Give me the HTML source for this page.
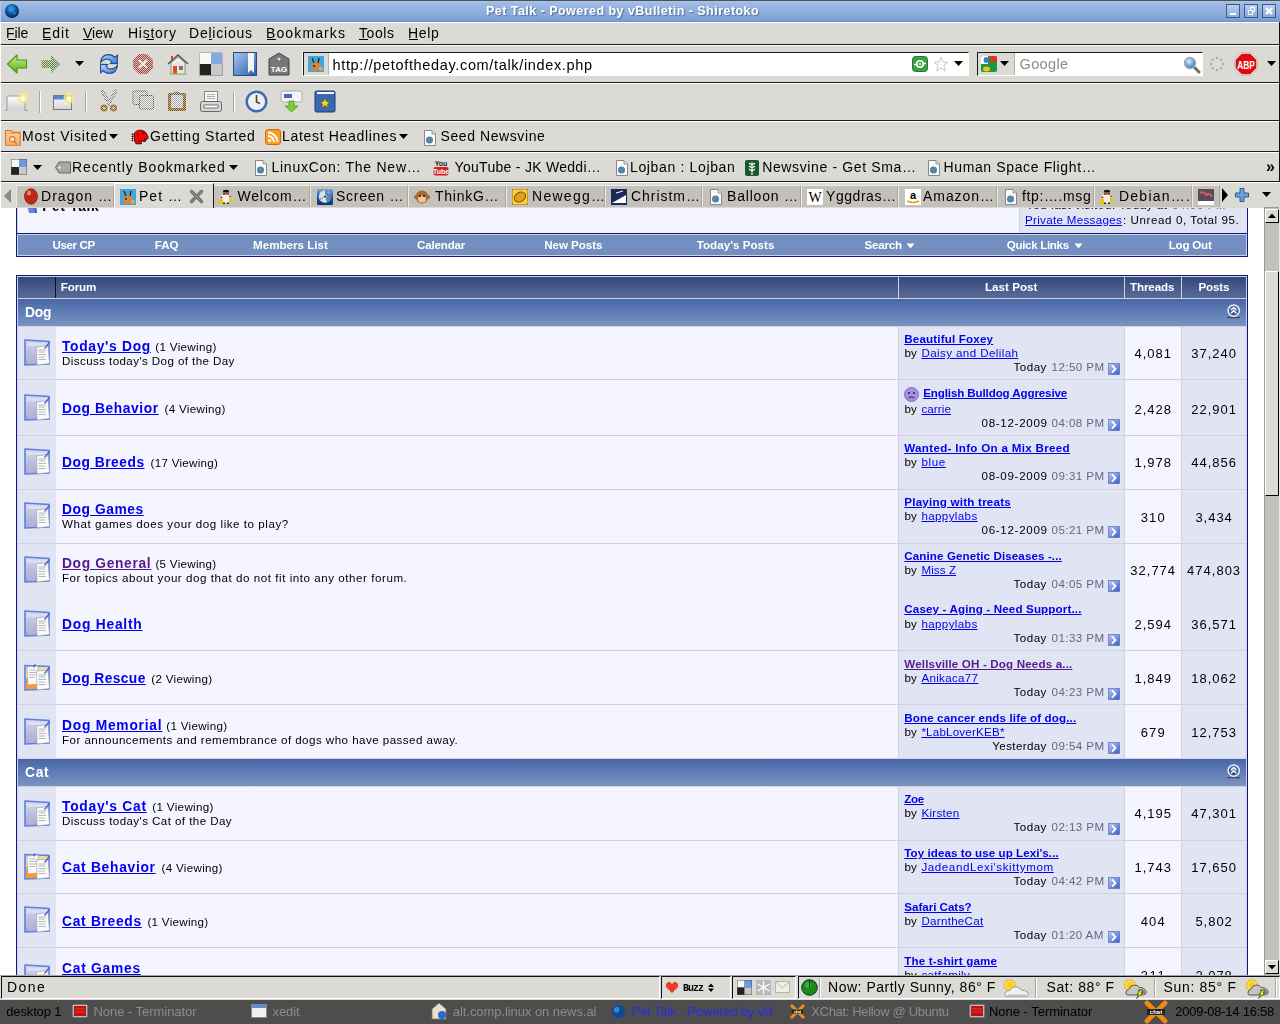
<!DOCTYPE html>
<html><head><meta charset="utf-8"><title>Pet Talk</title>
<style>*{margin:0;padding:0;box-sizing:border-box}
html,body{width:1280px;height:1024px;overflow:hidden;background:#dcdad5;font-family:"Liberation Sans",sans-serif;font-size:13px;color:#000}
.a{position:absolute}
.t{position:absolute;white-space:nowrap;line-height:1}
.u{text-decoration:underline}
</style></head><body>
<div class="a" style="left:0;top:22px;width:1280px;height:954px;background:#dcdad5"></div><div class="a" style="left:0;top:22px;width:1280px;height:1px;background:#fff"></div><div class="a" style="left:0;top:44px;width:1280px;height:1px;background:#1e1e1e"></div><div class="a" style="left:0;top:45px;width:1280px;height:1px;background:#fff"></div><div class="a" style="left:0;top:82px;width:1280px;height:1px;background:#1e1e1e"></div><div class="a" style="left:0;top:83px;width:1280px;height:1px;background:#fff"></div><div class="a" style="left:0;top:120px;width:1280px;height:1px;background:#1e1e1e"></div><div class="a" style="left:0;top:121px;width:1280px;height:1px;background:#fff"></div><div class="a" style="left:0;top:151px;width:1280px;height:1px;background:#1e1e1e"></div><div class="a" style="left:0;top:152px;width:1280px;height:1px;background:#fff"></div><div class="a" style="left:0;top:181px;width:1280px;height:1px;background:#1e1e1e"></div><div class="a" style="left:0;top:182px;width:1280px;height:1px;background:#fff"></div><div class="a" style="left:1279px;top:22px;width:1px;height:160px;background:#111"></div><div class="a" style="left:0;top:0;width:1280px;height:1px;background:#505050"></div>
<div class="a" style="left:0;top:1px;width:1280px;height:21px;background:linear-gradient(#b3cdf2 0,#a0bde7 1px,#93b2e0 8px,#84a6d8 16px,#7a9ed3 20px,#5f86c2 21px)"></div>
<svg class="a" style="left:4px;top:3px" width="16" height="16" viewBox="0 0 16 16"><defs><radialGradient id="gl" cx="0.45" cy="0.35" r="0.75"><stop offset="0" stop-color="#54b4ec"/><stop offset="0.45" stop-color="#0e56aa"/><stop offset="1" stop-color="#03132e"/></radialGradient></defs><circle cx="8" cy="8" r="7" fill="url(#gl)"/><path d="M4 5 Q7 3 9 5 Q8 8 5 8Z M9 9 Q12 8 12 11 Q10 13 9 11Z" fill="#2a90d8" opacity=".6"/></svg>
<div class="a" style="left:1226px;top:4px;width:14px;height:14px;border:1px solid #3f5a80;background:linear-gradient(#b8d0f2,#8aaad9)"></div>
<div class="a" style="left:1244px;top:4px;width:14px;height:14px;border:1px solid #3f5a80;background:linear-gradient(#b8d0f2,#8aaad9)"></div>
<div class="a" style="left:1262px;top:4px;width:14px;height:14px;border:1px solid #3f5a80;background:linear-gradient(#b8d0f2,#8aaad9)"></div>
<div class="a" style="left:1230px;top:13px;width:6px;height:2px;background:#fff"></div>
<div class="a" style="left:1250px;top:7px;width:5px;height:5px;border:1px solid #fff"></div><div class="a" style="left:1248px;top:10px;width:5px;height:5px;border:1px solid #fff;background:#8fb0de"></div>
<svg class="a" style="left:1265px;top:7px" width="8" height="8" viewBox="0 0 8 8"><path d="M1 1L7 7M7 1L1 7" stroke="#fff" stroke-width="2.2"/></svg>
<div class="a" style="left:8px;top:39px;width:8px;height:1px;background:#000"></div>
<div class="a" style="left:43px;top:39px;width:8px;height:1px;background:#000"></div>
<div class="a" style="left:83px;top:39px;width:9px;height:1px;background:#000"></div>
<div class="a" style="left:146px;top:39px;width:8px;height:1px;background:#000"></div>
<div class="a" style="left:209px;top:39px;width:3px;height:1px;background:#000"></div>
<div class="a" style="left:267px;top:39px;width:9px;height:1px;background:#000"></div>
<div class="a" style="left:359px;top:39px;width:9px;height:1px;background:#000"></div>
<div class="a" style="left:409px;top:39px;width:9px;height:1px;background:#000"></div>
<svg class="a" style="left:6px;top:53px" width="22" height="22" viewBox="0 0 22 22"><defs><linearGradient id="gb" x1="0" y1="0" x2="0" y2="1"><stop offset="0" stop-color="#c6f08a"/><stop offset="1" stop-color="#58b01e"/></linearGradient></defs><path d="M1.5 11 L11 2 V7 H20.5 V15 H11 V20 Z" fill="url(#gb)" stroke="#4a9a10" stroke-width="1.2" stroke-linejoin="round"/></svg>
<svg class="a" style="left:40px;top:53px" width="22" height="22" viewBox="0 0 22 22"><defs><pattern id="dot" width="2" height="2" patternUnits="userSpaceOnUse"><rect width="1" height="1" fill="#3f7a22"/><rect x="1" y="1" width="1" height="1" fill="#3f7a22"/></pattern></defs><path d="M20.5 11 L11 2 V7 H1.5 V15 H11 V20 Z" fill="url(#dot)" opacity=".9"/></svg>
<svg class="a" style="left:75px;top:61px" width="10" height="6"><path d="M0 0H9L4.5 5Z" fill="#000"/></svg>
<svg class="a" style="left:100px;top:54px" width="18" height="20" viewBox="0 0 18 20"><defs><linearGradient id="grl" x1="0" y1="0" x2="1" y2="1"><stop offset="0" stop-color="#c0dcf8"/><stop offset="1" stop-color="#3e74c4"/></linearGradient></defs><path d="M0.5 8.6 Q1.5 0.6 8.5 0.6 Q12.5 0.6 14.8 3.4 L17.4 1.2 L17.4 9.6 L10.4 9.5 L11.9 7.8 Q10 5 7.5 5 Q3 5.2 0.5 8.6Z" fill="url(#grl)" stroke="#1c4c9c" stroke-width="1.1" stroke-linejoin="miter"/><path d="M17.5 11.4 Q16.5 19.4 9.5 19.4 Q5.5 19.4 3.2 16.6 L0.6 18.8 L0.6 10.4 L7.6 10.5 L6.1 12.2 Q8 15 10.5 15 Q15 14.8 17.5 11.4Z" fill="url(#grl)" stroke="#1c4c9c" stroke-width="1.1" stroke-linejoin="miter"/></svg>
<svg class="a" style="left:132px;top:53px" width="22" height="22" viewBox="0 0 22 22"><defs><pattern id="dotr" width="2" height="2" patternUnits="userSpaceOnUse"><rect width="2" height="2" fill="#d8c8c0"/><rect width="1" height="1" fill="#a04040"/><rect x="1" y="1" width="1" height="1" fill="#a04040"/></pattern></defs><path d="M7 1H15L21 7V15L15 21H7L1 15V7Z" fill="url(#dotr)"/><path d="M7 7L15 15M15 7L7 15" stroke="#eee" stroke-width="2"/></svg>
<svg class="a" style="left:166px;top:52px" width="24" height="24" viewBox="0 0 24 24"><path d="M2 12 L12 3 L22 12" fill="none" stroke="#555" stroke-width="1.6"/><path d="M5 11 L12 5 L19 11 V22 H5Z" fill="#f2f0ea" stroke="#777" stroke-width=".8"/><path d="M7 12V21M9 11V21M11 10V21M13 10V21M15 11V21M17 12V21" stroke="#ccc" stroke-width=".6"/><rect x="7" y="14" width="4" height="8" fill="#e0501a"/><rect x="13" y="14" width="4" height="4" fill="#777"/><rect x="3" y="21.5" width="18" height="1.2" fill="#9acd5a"/><rect x="5" y="4" width="2" height="4" fill="#d84a1a"/></svg>
<svg class="a" style="left:199px;top:52px" width="24" height="24" viewBox="0 0 24 24"><rect x="0.5" y="0.5" width="23" height="23" fill="#666" /><rect x="1" y="1" width="11" height="11" fill="#f4f4f4"/><rect x="12" y="1" width="11" height="11" fill="#5a8fd8"/><rect x="1" y="12" width="11" height="11" fill="#222"/><rect x="12" y="12" width="11" height="11" fill="#c8c8c8"/><rect x="0" y="0" width="24" height="12" fill="#fff" opacity=".25"/></svg>
<svg class="a" style="left:233px;top:52px" width="24" height="24" viewBox="0 0 24 24"><defs><linearGradient id="gbm" x1="0" y1="0" x2="1" y2="1"><stop offset="0" stop-color="#a8c8f0"/><stop offset="1" stop-color="#2a5ca8"/></linearGradient></defs><rect x="0.5" y="0.5" width="23" height="23" fill="url(#gbm)" stroke="#2a4a80"/><path d="M15 1 V21 L18 18 L21 21 V1Z" fill="#f4f4f4"/></svg>
<svg class="a" style="left:268px;top:52px" width="22" height="24" viewBox="0 0 22 24"><path d="M1 7 L11 1 L21 7 V23 H1Z" fill="#777" stroke="#444"/><circle cx="11" cy="7" r="1.5" fill="#ddd"/><text x="11" y="20" font-family="Liberation Sans" font-weight="bold" font-size="8" fill="#fff" text-anchor="middle">TAG</text></svg>
<div class="a" style="left:303px;top:52px;width:666px;height:24px;background:#fff;border:1px solid #fff;border-top-color:#1a1a1a;border-left-color:#1a1a1a"></div>
<div class="a" style="left:302px;top:52px;width:1px;height:24px;background:#fff"></div>
<div class="a" style="left:304px;top:53px;width:25px;height:22px;background:#dcdad5;border-right:1px solid #b5b3ae"></div>
<svg class="a" style="left:308px;top:56px" width="16" height="16" viewBox="0 0 16 16"><rect width="16" height="16" fill="#38a8e8"/><path d="M3 1 L6 7 L9 6 L11 1 L12 8 Q14 12 10 15 H3 Q1 12 4 9Z" fill="#c88a4a"/><path d="M4 2 L6 7 M11 2 L10 7" stroke="#222" stroke-width="1.3"/><circle cx="6" cy="10" r="1" fill="#222"/><path d="M11 11 Q15 10 15 14 Q13 16 11 14Z" fill="#f0a040"/></svg>
<svg class="a" style="left:912px;top:56px" width="16" height="16" viewBox="0 0 16 16"><rect x="0.5" y="0.5" width="15" height="15" rx="3" fill="#3aa04a" stroke="#2a7a36"/><circle cx="8" cy="8" r="3.2" fill="none" stroke="#fff" stroke-width="1.6"/><path d="M2 8.5 H5 M11 7.5 H14" stroke="#fff" stroke-width="1.6"/><circle cx="8" cy="8" r="1" fill="#fff"/></svg>
<svg class="a" style="left:933px;top:56px" width="16" height="16" viewBox="0 0 16 16"><path d="M8 1 L10 6 L15 6.2 L11 9.5 L12.5 15 L8 12 L3.5 15 L5 9.5 L1 6.2 L6 6Z" fill="#fafafa" stroke="#bbb" stroke-width=".8"/></svg>
<svg class="a" style="left:954px;top:61px" width="10" height="6"><path d="M0 0H9L4.5 5Z" fill="#000"/></svg>
<div class="a" style="left:977px;top:52px;width:226px;height:24px;background:#fff;border:1px solid #fff;border-top-color:#1a1a1a;border-left-color:#1a1a1a"></div>
<div class="a" style="left:978px;top:53px;width:37px;height:22px;background:#dcdad5;border-right:1px solid #b5b3ae"></div>
<svg class="a" style="left:981px;top:56px" width="16" height="16" viewBox="0 0 16 16"><rect x="0" y="0" width="16" height="16" rx="2" fill="#1a9a3a"/><path d="M9 0 H14 Q16 0 16 2 V6 H9Z" fill="#e83020"/><path d="M0 2 Q0 0 2 0 H7 V8 H0Z" fill="#fff"/><ellipse cx="5" cy="4" rx="2.4" ry="3" fill="#3a7ae0"/><ellipse cx="5.5" cy="13" rx="3.5" ry="2.5" fill="#f8c020"/></svg>
<svg class="a" style="left:1000px;top:61px" width="10" height="6"><path d="M0 0H9L4.5 5Z" fill="#000"/></svg>
<svg class="a" style="left:1183px;top:56px" width="18" height="18" viewBox="0 0 18 18"><defs><radialGradient id="mg" cx="0.4" cy="0.35" r="0.7"><stop offset="0" stop-color="#e0f0ff"/><stop offset="0.6" stop-color="#6a9ee0"/><stop offset="1" stop-color="#3a6ab0"/></radialGradient></defs><path d="M11 11 L16 16" stroke="#6a6e6a" stroke-width="3" stroke-linecap="round"/><circle cx="7" cy="7" r="5.5" fill="url(#mg)" stroke="#a8aaa8" stroke-width="1.4"/></svg>
<svg class="a" style="left:1209px;top:56px" width="16" height="16" viewBox="0 0 16 16"><g fill="#aaa"><circle cx="8" cy="2" r="1.2"/><circle cx="12.2" cy="3.8" r="1.2"/><circle cx="14" cy="8" r="1.2"/><circle cx="12.2" cy="12.2" r="1.2"/><circle cx="8" cy="14" r="1.2"/><circle cx="3.8" cy="12.2" r="1.2"/><circle cx="2" cy="8" r="1.2"/><circle cx="3.8" cy="3.8" r="1.2"/></g></svg>
<svg class="a" style="left:1234px;top:52px" width="24" height="24" viewBox="0 0 24 24"><path d="M7.5 1 H16.5 L23 7.5 V16.5 L16.5 23 H7.5 L1 16.5 V7.5Z" fill="#e00c0c" stroke="#f4f4f4" stroke-width="1.3"/><path d="M7.3 0.4 H16.7 L23.6 7.3 V16.7 L16.7 23.6 H7.3 L0.4 16.7 V7.3Z" fill="none" stroke="#8a8a8a" stroke-width=".5"/><text x="3.2" y="16.5" font-family="Liberation Sans" font-weight="bold" font-size="10.5" fill="#fff" textLength="17.6" lengthAdjust="spacingAndGlyphs">ABP</text></svg>
<svg class="a" style="left:1267px;top:61px" width="10" height="6"><path d="M0 0H9L4.5 5Z" fill="#000"/></svg><svg class="a" style="left:4px;top:92px" width="26" height="20" viewBox="0 0 26 20"><defs><linearGradient id="gnt" x1="0" y1="0" x2="0" y2="1"><stop offset="0" stop-color="#fff"/><stop offset="1" stop-color="#d0d0d0"/></linearGradient></defs><path d="M1 18.5 H3 V6 Q3 4 5 4 H19 Q21 4 21 6 V18.5 H24" fill="url(#gnt)" stroke="#999" stroke-width="1"/><circle cx="19" cy="6" r="5.5" fill="#f8ec70" opacity=".8"/><path d="M19 2.5 L20 5 L22.5 5.2 L20.6 6.8 L21.2 9.3 L19 8 L16.8 9.3 L17.4 6.8 L15.5 5.2 L18 5Z" fill="#fff"/></svg>
<div class="a" style="left:39px;top:91px;width:1px;height:22px;background:#a8a6a0"></div><div class="a" style="left:40px;top:91px;width:1px;height:22px;background:#fff"></div>
<svg class="a" style="left:52px;top:92px" width="24" height="20" viewBox="0 0 24 20"><defs><linearGradient id="gnw" x1="0" y1="0" x2="0" y2="1"><stop offset="0" stop-color="#fff"/><stop offset="1" stop-color="#d4d4d4"/></linearGradient></defs><rect x="1.5" y="3.5" width="18" height="14" fill="url(#gnw)" stroke="#777"/><rect x="2" y="4" width="17" height="3.5" fill="#5a8ad0"/><circle cx="17" cy="6" r="5.5" fill="#f8ec70" opacity=".8"/><path d="M17 2.5 L18 5 L20.5 5.2 L18.6 6.8 L19.2 9.3 L17 8 L14.8 9.3 L15.4 6.8 L13.5 5.2 L16 5Z" fill="#fff"/></svg>
<div class="a" style="left:85px;top:91px;width:1px;height:22px;background:#a8a6a0"></div><div class="a" style="left:86px;top:91px;width:1px;height:22px;background:#fff"></div>
<svg class="a" style="left:96px;top:86px" width="96" height="30" viewBox="0 0 96 30"><defs>
<pattern id="pl" width="2" height="2" patternUnits="userSpaceOnUse"><rect width="2" height="2" fill="#f4f4f4"/><rect width="1" height="1" fill="#a8a8a8"/><rect x="1" y="1" width="1" height="1" fill="#a8a8a8"/></pattern>
<pattern id="pd" width="2" height="2" patternUnits="userSpaceOnUse"><rect width="2" height="2" fill="#dcdad5"/><rect width="1" height="1" fill="#4a4a4a"/><rect x="1" y="1" width="1" height="1" fill="#4a4a4a"/></pattern>
<pattern id="pb" width="2" height="2" patternUnits="userSpaceOnUse"><rect width="2" height="2" fill="#c8b088"/><rect width="1" height="1" fill="#7a5418"/><rect x="1" y="1" width="1" height="1" fill="#7a5418"/></pattern></defs>
<path d="M6.5 5.5 L13 17 L19.5 5.5" fill="none" stroke="url(#pd)" stroke-width="3.2" stroke-linecap="round"/><path d="M6.5 5.5 L13 17 L19.5 5.5" fill="none" stroke="url(#pl)" stroke-width="1.6" stroke-linecap="round"/>
<circle cx="8" cy="22" r="3.6" fill="url(#pb)"/><circle cx="17.5" cy="22" r="3.6" fill="url(#pb)"/><circle cx="8" cy="22" r="1" fill="#f0f0f0"/><circle cx="17.5" cy="22" r="1" fill="#f0f0f0"/>
<rect x="37" y="5" width="14" height="13.5" rx="1" fill="url(#pl)" stroke="url(#pd)" stroke-width="1"/><rect x="43.5" y="9.5" width="14" height="13.5" rx="1" fill="url(#pl)" stroke="url(#pd)" stroke-width="1"/>
<rect x="72" y="7" width="18" height="18" rx="1" fill="url(#pb)"/><rect x="75" y="9" width="12" height="13" rx="1" fill="url(#pl)"/><path d="M77 9 Q77 5.5 81 5.5 Q85 5.5 85 9Z" fill="url(#pd)"/>
</svg>
<svg class="a" style="left:199px;top:90px" width="24" height="23" viewBox="0 0 24 23"><rect x="5.5" y="1.5" width="13" height="10" fill="#f8f8f8" stroke="#888"/><path d="M8 4.5H16M8 6.5H16M8 8.5H16" stroke="#999" stroke-width=".8"/><rect x="1.5" y="11.5" width="21" height="10" rx="2" fill="#d8d8d8" stroke="#666"/><rect x="5" y="15" width="14" height="3" fill="#fff" stroke="#555" stroke-width=".8"/></svg>
<div class="a" style="left:233px;top:91px;width:1px;height:22px;background:#a8a6a0"></div><div class="a" style="left:234px;top:91px;width:1px;height:22px;background:#fff"></div>
<svg class="a" style="left:245px;top:90px" width="23" height="23" viewBox="0 0 23 23"><circle cx="11.5" cy="11.5" r="9.8" fill="#f0f0f0" stroke="#3a6ab8" stroke-width="2.4"/><path d="M11.5 5 V12 L15 13.5" stroke="#444" stroke-width="1.6" fill="none"/></svg>
<svg class="a" style="left:280px;top:90px" width="23" height="23" viewBox="0 0 23 23"><rect x="1" y="1" width="21" height="11" rx="2" fill="#f4f4f4" stroke="#aaa"/><rect x="4" y="4" width="8" height="4" fill="#3a6ab8"/><path d="M9 11 H14 V16 H18 L11.5 22 L5 16 H9Z" fill="#7ad03a" stroke="#4a9a1a" stroke-width=".8"/></svg>
<svg class="a" style="left:314px;top:90px" width="22" height="23" viewBox="0 0 22 23"><rect x="1" y="1" width="20" height="21" rx="1.5" fill="#3a68b0" stroke="#1a3a78"/><rect x="3" y="2" width="17" height="2" fill="#fff"/><path d="M11 8 L12.5 11.5 L16 11.7 L13.3 14 L14.2 17.5 L11 15.5 L7.8 17.5 L8.7 14 L6 11.7 L9.5 11.5Z" fill="#f8d820" stroke="#6a5a10" stroke-width=".6"/></svg>
<svg class="a" style="left:5px;top:130px" width="16" height="16" viewBox="0 0 16 16"><defs><linearGradient id="fo" x1="0" y1="0" x2="0" y2="1"><stop offset="0" stop-color="#fbd8a8"/><stop offset="1" stop-color="#f0b070"/></linearGradient></defs><path d="M0.6 0.6 H6 L7.2 2.4 H15.2 V15.2 H0.6Z" fill="url(#fo)" stroke="#e07818" stroke-width="1.1"/><path d="M1 3.4 H15" stroke="#e8a060" stroke-width=".8"/><circle cx="7.2" cy="9.2" r="2.6" fill="#fce8d0" stroke="#e07818" stroke-width="1.2"/><path d="M9 11 L11.5 13.5" stroke="#e07818" stroke-width="1.5"/></svg>
<svg class="a" style="left:109px;top:134px" width="10" height="6"><path d="M0 0H9L4.5 5Z" fill="#000"/></svg>
<svg class="a" style="left:131px;top:129px" width="18" height="16" viewBox="0 0 18 16"><path d="M3 5 Q5 1 10 1.2 Q13 1.5 15 4 L17 7.5 Q17.5 9.5 16 10.5 L13 10 L15 12 L13 12.5 Q11 11.5 10 12.5 L10.5 14.8 H5 Q3 12 3.5 10 Q2.5 7 3 5Z" fill="#f00" stroke="#1a0a0a" stroke-width=".9"/><path d="M6 4 Q8 6 7 9 M8 10 Q9 12 8 13" stroke="#6a0000" stroke-width="1" fill="none"/><circle cx="12.5" cy="4.2" r=".9" fill="#222"/><g fill="#000"><circle cx="1.4" cy="5.4" r=".8"/><circle cx="1.4" cy="7.5" r=".8"/><circle cx="1.4" cy="9.5" r=".8"/><circle cx="1.4" cy="11.4" r=".8"/></g></svg>
<svg class="a" style="left:265px;top:129px" width="16" height="16" viewBox="0 0 16 16"><rect x="0.5" y="0.5" width="15" height="15" rx="2.5" fill="#f6a020" stroke="#d06a10"/><circle cx="4.5" cy="11.5" r="1.6" fill="#fff"/><path d="M3 7 A6 6 0 0 1 9 13 M3 3.5 A9.5 9.5 0 0 1 12.5 13" fill="none" stroke="#fff" stroke-width="1.8"/></svg>
<svg class="a" style="left:399px;top:134px" width="10" height="6"><path d="M0 0H9L4.5 5Z" fill="#000"/></svg>
<svg class="a" style="left:422px;top:130px" width="16" height="16" viewBox="0 0 16 16"><path d="M2.5 0.5 H10 L13.5 4 V15.5 H2.5Z" fill="#fafafa" stroke="#888" stroke-width="1"/><path d="M10 0.5 V4 H13.5" fill="#ddd" stroke="#888" stroke-width=".8"/><circle cx="7.5" cy="10" r="3.5" fill="#4a80c0"/><path d="M5.5 9 Q7 7.5 8.5 9 Q8 11 6 11.5Z M8.5 11 Q10 10 10.5 11.5" fill="#6aa040"/></svg>
<svg class="a" style="left:11px;top:159px" width="16" height="16" viewBox="0 0 16 16"><rect x="0" y="0" width="16" height="16" fill="#555"/><rect x="0.5" y="0.5" width="7.5" height="7.5" fill="#f8f8f8"/><rect x="8" y="0.5" width="7.5" height="7.5" fill="#6a9ae0"/><rect x="0.5" y="8" width="7.5" height="7.5" fill="#222"/><rect x="8" y="8" width="7.5" height="7.5" fill="#c8c8c8"/></svg>
<svg class="a" style="left:33px;top:165px" width="10" height="6"><path d="M0 0H9L4.5 5Z" fill="#000"/></svg>
<svg class="a" style="left:55px;top:161px" width="16" height="13" viewBox="0 0 16 13"><path d="M0.5 6.5 L4 1 H15.5 V12 H4Z" fill="#a8a8a8" stroke="#666"/><circle cx="4.5" cy="6.5" r="1.2" fill="#eee"/></svg>
<svg class="a" style="left:229px;top:165px" width="10" height="6"><path d="M0 0H9L4.5 5Z" fill="#000"/></svg>
<svg class="a" style="left:253px;top:160px" width="16" height="16" viewBox="0 0 16 16"><path d="M2.5 0.5 H10 L13.5 4 V15.5 H2.5Z" fill="#fafafa" stroke="#888" stroke-width="1"/><path d="M10 0.5 V4 H13.5" fill="#ddd" stroke="#888" stroke-width=".8"/><circle cx="7.5" cy="10" r="3.5" fill="#4a80c0"/><path d="M5.5 9 Q7 7.5 8.5 9 Q8 11 6 11.5Z M8.5 11 Q10 10 10.5 11.5" fill="#6aa040"/></svg>
<svg class="a" style="left:433px;top:159px" width="16" height="17" viewBox="0 0 16 17"><text x="8" y="7" font-family="Liberation Sans" font-weight="bold" font-size="7" fill="#222" text-anchor="middle">You</text><rect x="0.5" y="8" width="15" height="8.5" rx="2" fill="#d02020"/><text x="8" y="15" font-family="Liberation Sans" font-weight="bold" font-size="7" fill="#fff" text-anchor="middle">Tube</text></svg>
<svg class="a" style="left:614px;top:160px" width="16" height="16" viewBox="0 0 16 16"><path d="M2.5 0.5 H10 L13.5 4 V15.5 H2.5Z" fill="#fafafa" stroke="#888" stroke-width="1"/><path d="M10 0.5 V4 H13.5" fill="#ddd" stroke="#888" stroke-width=".8"/><circle cx="7.5" cy="10" r="3.5" fill="#4a80c0"/><path d="M5.5 9 Q7 7.5 8.5 9 Q8 11 6 11.5Z M8.5 11 Q10 10 10.5 11.5" fill="#6aa040"/></svg>
<svg class="a" style="left:745px;top:160px" width="14" height="16" viewBox="0 0 14 16"><rect x="0" y="0" width="14" height="16" rx="2" fill="#1a5a2a"/><path d="M7 2 V15 M7 5 L4 3 M7 5 L10 3 M7 8 L4 6 M7 8 L10 6 M7 11 L4 9 M7 11 L10 9" stroke="#fff" stroke-width="1.1" fill="none"/></svg>
<svg class="a" style="left:926px;top:160px" width="16" height="16" viewBox="0 0 16 16"><path d="M2.5 0.5 H10 L13.5 4 V15.5 H2.5Z" fill="#fafafa" stroke="#888" stroke-width="1"/><path d="M10 0.5 V4 H13.5" fill="#ddd" stroke="#888" stroke-width=".8"/><circle cx="7.5" cy="10" r="3.5" fill="#4a80c0"/><path d="M5.5 9 Q7 7.5 8.5 9 Q8 11 6 11.5Z M8.5 11 Q10 10 10.5 11.5" fill="#6aa040"/></svg>
<div class="a" style="left:0;top:183px;width:1280px;height:24px;background:#dcdad5"></div>
<svg class="a" style="left:3px;top:188px" width="9" height="16"><path d="M8 1 V15 L1 8Z" fill="#8a8a8a"/></svg>
<div class="a" style="left:16px;top:185px;width:98px;height:22px;background:#c4c1ba;border-top:1px solid #ecebe8;border-left:1px solid #ecebe8;border-right:1px solid #a8a6a0"></div>
<div class="a" style="left:213px;top:185px;width:97px;height:22px;background:#c4c1ba;border-top:1px solid #ecebe8;border-left:1px solid #ecebe8;border-right:1px solid #a8a6a0"></div>
<div class="a" style="left:310px;top:185px;width:98px;height:22px;background:#c4c1ba;border-top:1px solid #ecebe8;border-left:1px solid #ecebe8;border-right:1px solid #a8a6a0"></div>
<div class="a" style="left:408px;top:185px;width:98px;height:22px;background:#c4c1ba;border-top:1px solid #ecebe8;border-left:1px solid #ecebe8;border-right:1px solid #a8a6a0"></div>
<div class="a" style="left:506px;top:185px;width:99px;height:22px;background:#c4c1ba;border-top:1px solid #ecebe8;border-left:1px solid #ecebe8;border-right:1px solid #a8a6a0"></div>
<div class="a" style="left:605px;top:185px;width:97px;height:22px;background:#c4c1ba;border-top:1px solid #ecebe8;border-left:1px solid #ecebe8;border-right:1px solid #a8a6a0"></div>
<div class="a" style="left:702px;top:185px;width:99px;height:22px;background:#c4c1ba;border-top:1px solid #ecebe8;border-left:1px solid #ecebe8;border-right:1px solid #a8a6a0"></div>
<div class="a" style="left:801px;top:185px;width:97px;height:22px;background:#c4c1ba;border-top:1px solid #ecebe8;border-left:1px solid #ecebe8;border-right:1px solid #a8a6a0"></div>
<div class="a" style="left:898px;top:185px;width:99px;height:22px;background:#c4c1ba;border-top:1px solid #ecebe8;border-left:1px solid #ecebe8;border-right:1px solid #a8a6a0"></div>
<div class="a" style="left:997px;top:185px;width:97px;height:22px;background:#c4c1ba;border-top:1px solid #ecebe8;border-left:1px solid #ecebe8;border-right:1px solid #a8a6a0"></div>
<div class="a" style="left:1094px;top:185px;width:98px;height:22px;background:#c4c1ba;border-top:1px solid #ecebe8;border-left:1px solid #ecebe8;border-right:1px solid #a8a6a0"></div>
<div class="a" style="left:1192px;top:185px;width:28px;height:22px;background:#c4c1ba;border-top:1px solid #ecebe8;border-left:1px solid #ecebe8;border-right:1px solid #a8a6a0"></div>
<div class="a" style="left:114px;top:183px;width:100px;height:25px;background:#dcdad5;border-left:1px solid #fff;border-top:1px solid #fff;border-right:1px solid #1a1a1a"></div>
<svg class="a" style="left:22.5px;top:188px" width="16" height="17" viewBox="0 0 16 17"><ellipse cx="8" cy="8.5" rx="6.5" ry="7.8" fill="#c0281a" stroke="#601008" stroke-width=".6"/><ellipse cx="6" cy="5" rx="2" ry="2.5" fill="#f08070"/></svg>
<svg class="a" style="left:120px;top:189px" width="16" height="16" viewBox="0 0 16 16"><rect width="16" height="16" fill="#38a8e8"/><path d="M3 1 L6 7 L9 6 L11 1 L12 8 Q14 12 10 15 H3 Q1 12 4 9Z" fill="#c88a4a"/><path d="M4 2 L6 7 M11 2 L10 7" stroke="#222" stroke-width="1.3"/><circle cx="6" cy="10" r="1" fill="#222"/><path d="M11 11 Q15 10 15 14 Q13 16 11 14Z" fill="#f0a040"/></svg>
<svg class="a" style="left:219px;top:189px" width="16" height="16" viewBox="0 0 16 16"><path d="M4 1.5 Q7 0 10 1.5 V3 H4Z" fill="#111"/><rect x="4" y="3" width="6" height="3" fill="#8a5a5a"/><path d="M6 5 H8.5 L7.3 6.5Z" fill="#f0b000"/><rect x="2" y="6" width="9.5" height="6.5" rx="1.5" fill="#f2f2e4"/><circle cx="2.6" cy="8.5" r=".7" fill="#000"/><circle cx="11" cy="7.5" r=".7" fill="#000"/><rect x="0" y="10" width="4" height="5" fill="#f4c000"/><path d="M10 9 H12 V12 H14.5 V13.5 H10Z" fill="#f4c000"/><rect x="4" y="12.5" width="6" height="1.2" fill="#fff"/><rect x="4" y="13.6" width="2" height="1.2" fill="#000"/><rect x="8" y="13.6" width="2" height="1.2" fill="#000"/></svg>
<svg class="a" style="left:316.5px;top:189px" width="16" height="16" viewBox="0 0 16 16"><defs><linearGradient id="gsc" x1="0" y1="0" x2="0" y2="1"><stop offset="0" stop-color="#7aa4dc"/><stop offset=".5" stop-color="#1e5aa8"/><stop offset="1" stop-color="#08306a"/></linearGradient></defs><rect width="16" height="16" rx="1.5" fill="url(#gsc)"/><circle cx="8" cy="7.6" r="6.2" fill="#c8e8f8"/><path d="M8 1.4 A6.2 6.2 0 0 1 14.2 7.6 A6.2 6.2 0 0 1 10 13.5 L8 7.6Z" fill="#3a6aa8" opacity=".8"/><circle cx="8" cy="7.6" r="1.6" fill="#0a2a6a" stroke="#fff" stroke-width=".8"/><circle cx="3.6" cy="9.8" r=".9" fill="#f07010"/><circle cx="5.2" cy="9" r=".7" fill="#f07010"/><path d="M11 2 L11.8 4.5 L10.5 4Z M12.5 10 L11.2 12.5 L12 12Z M3 1.5 L3.8 2.8 L2.8 2.8Z" fill="#f8e040"/></svg>
<svg class="a" style="left:414px;top:189px" width="16" height="16" viewBox="0 0 16 16"><circle cx="8" cy="8" r="6.5" fill="#a86a30"/><circle cx="2" cy="8" r="2" fill="#a86a30"/><circle cx="14" cy="8" r="2" fill="#a86a30"/><ellipse cx="8" cy="10" rx="4" ry="3.5" fill="#f0c890"/><circle cx="6" cy="7" r=".9" fill="#000"/><circle cx="10" cy="7" r=".9" fill="#000"/></svg>
<svg class="a" style="left:512px;top:189px" width="16" height="16" viewBox="0 0 16 16"><rect width="16" height="16" rx="2" fill="#f8d040" stroke="#9a7010"/><ellipse cx="8" cy="8" rx="6" ry="4.5" fill="#e0a020" stroke="#7a4a00" transform="rotate(-30 8 8)"/></svg>
<svg class="a" style="left:610.6px;top:189px" width="16" height="16" viewBox="0 0 16 16"><rect width="16" height="16" fill="#1a2a5a"/><path d="M1 14 L15 6 V14Z" fill="#fff"/><path d="M5 4 L12 2" stroke="#fff"/></svg>
<svg class="a" style="left:708px;top:189px" width="16" height="16" viewBox="0 0 16 16"><path d="M2.5 0.5 H10 L13.5 4 V15.5 H2.5Z" fill="#fafafa" stroke="#888" stroke-width="1"/><path d="M10 0.5 V4 H13.5" fill="#ddd" stroke="#888" stroke-width=".8"/><circle cx="7.5" cy="10" r="3.5" fill="#4a80c0"/><path d="M5.5 9 Q7 7.5 8.5 9 Q8 11 6 11.5Z M8.5 11 Q10 10 10.5 11.5" fill="#6aa040"/></svg>
<svg class="a" style="left:806.6px;top:189px" width="16" height="16" viewBox="0 0 16 16"><rect width="16" height="16" fill="#fff"/><text x="8" y="13" font-family="Liberation Serif" font-size="14" fill="#000" text-anchor="middle">W</text></svg>
<svg class="a" style="left:904.5px;top:189px" width="16" height="16" viewBox="0 0 16 16"><rect width="16" height="16" fill="#fff"/><text x="8" y="10" font-family="Liberation Sans" font-weight="bold" font-size="11" fill="#000" text-anchor="middle">a</text><path d="M2 12 Q8 15 14 12" stroke="#f0a000" stroke-width="1.5" fill="none"/></svg>
<svg class="a" style="left:1002.8px;top:189px" width="16" height="16" viewBox="0 0 16 16"><path d="M2.5 0.5 H10 L13.5 4 V15.5 H2.5Z" fill="#fafafa" stroke="#888" stroke-width="1"/><path d="M10 0.5 V4 H13.5" fill="#ddd" stroke="#888" stroke-width=".8"/><circle cx="7.5" cy="10" r="3.5" fill="#4a80c0"/><path d="M5.5 9 Q7 7.5 8.5 9 Q8 11 6 11.5Z M8.5 11 Q10 10 10.5 11.5" fill="#6aa040"/></svg>
<svg class="a" style="left:1100px;top:189px" width="16" height="16" viewBox="0 0 16 16"><path d="M4 1.5 Q7 0 10 1.5 V3 H4Z" fill="#111"/><rect x="4" y="3" width="6" height="3" fill="#8a5a5a"/><path d="M6 5 H8.5 L7.3 6.5Z" fill="#f0b000"/><rect x="2" y="6" width="9.5" height="6.5" rx="1.5" fill="#f2f2e4"/><circle cx="2.6" cy="8.5" r=".7" fill="#000"/><circle cx="11" cy="7.5" r=".7" fill="#000"/><rect x="0" y="10" width="4" height="5" fill="#f4c000"/><path d="M10 9 H12 V12 H14.5 V13.5 H10Z" fill="#f4c000"/><rect x="4" y="12.5" width="6" height="1.2" fill="#fff"/><rect x="4" y="13.6" width="2" height="1.2" fill="#000"/><rect x="8" y="13.6" width="2" height="1.2" fill="#000"/></svg>
<svg class="a" style="left:1198px;top:189px" width="16" height="16" viewBox="0 0 16 16"><rect width="16" height="12" fill="#5a4a5a"/><rect y="12" width="16" height="4" fill="#fff"/><path d="M2 4 Q6 2 8 6 Q12 3 14 8" stroke="#c06060" stroke-width="2" fill="none"/></svg>
<svg class="a" style="left:189px;top:189px" width="15" height="15" viewBox="0 0 15 15"><path d="M2.5 2.5L12.5 12.5M12.5 2.5L2.5 12.5" stroke="#666" stroke-width="3.2" stroke-linecap="round"/><path d="M2.5 2.5L12.5 12.5M12.5 2.5L2.5 12.5" stroke="#8a8a8a" stroke-width="1.6" stroke-linecap="round"/></svg>
<svg class="a" style="left:1221px;top:187px" width="8" height="16"><path d="M1 1 V15 L7 8Z" fill="#000"/></svg>
<svg class="a" style="left:1234px;top:187px" width="16" height="16" viewBox="0 0 16 16"><path d="M6 1.5 H10 V6 H14.5 V10 H10 V14.5 H6 V10 H1.5 V6 H6Z" fill="#70a0d8" stroke="#2a5aa0"/></svg>
<svg class="a" style="left:1262px;top:192px" width="10" height="6"><path d="M0 0H9L4.5 5Z" fill="#000"/></svg>
<div class="a" style="left:0;top:0;width:1280px;height:1024px;will-change:transform"><div class="t" style="left:486.00px;top:5.00px;font-size:12.5px;font-weight:bold;color:#fff;letter-spacing:0.461px;font-family:'Liberation Sans';text-shadow:1px 1px 1px rgba(40,60,100,.55);">Pet Talk - Powered by vBulletin - Shiretoko</div>
<div class="t" style="left:6.00px;top:26.00px;font-size:14px;font-weight:normal;color:#000;letter-spacing:-0.091px;font-family:'Liberation Sans';">File</div>
<div class="t" style="left:42.00px;top:26.00px;font-size:14px;font-weight:normal;color:#000;letter-spacing:0.922px;font-family:'Liberation Sans';">Edit</div>
<div class="t" style="left:83.00px;top:26.00px;font-size:14px;font-weight:normal;color:#000;letter-spacing:0.006px;font-family:'Liberation Sans';">View</div>
<div class="t" style="left:128.00px;top:26.00px;font-size:14px;font-weight:normal;color:#000;letter-spacing:0.740px;font-family:'Liberation Sans';">History</div>
<div class="t" style="left:189.00px;top:26.00px;font-size:14px;font-weight:normal;color:#000;letter-spacing:0.775px;font-family:'Liberation Sans';">Delicious</div>
<div class="t" style="left:266.00px;top:26.00px;font-size:14px;font-weight:normal;color:#000;letter-spacing:1.122px;font-family:'Liberation Sans';">Bookmarks</div>
<div class="t" style="left:359.00px;top:26.00px;font-size:14px;font-weight:normal;color:#000;letter-spacing:0.579px;font-family:'Liberation Sans';">Tools</div>
<div class="t" style="left:408.00px;top:26.00px;font-size:14px;font-weight:normal;color:#000;letter-spacing:0.664px;font-family:'Liberation Sans';">Help</div>
<div class="t" style="left:332.50px;top:58.00px;font-size:14.5px;font-weight:normal;color:#000;letter-spacing:0.657px;font-family:'Liberation Sans';">http://petoftheday.com/talk/index.php</div>
<div class="t" style="left:1019.50px;top:57.00px;font-size:14.5px;font-weight:normal;color:#8a8a8a;letter-spacing:0.361px;font-family:'Liberation Sans';">Google</div>
<div class="t" style="left:22.00px;top:129.00px;font-size:14px;font-weight:normal;color:#000;letter-spacing:0.799px;font-family:'Liberation Sans';">Most Visited</div>
<div class="t" style="left:150.00px;top:129.00px;font-size:14px;font-weight:normal;color:#000;letter-spacing:0.759px;font-family:'Liberation Sans';">Getting Started</div>
<div class="t" style="left:282.00px;top:129.00px;font-size:14px;font-weight:normal;color:#000;letter-spacing:0.681px;font-family:'Liberation Sans';">Latest Headlines</div>
<div class="t" style="left:440.50px;top:129.00px;font-size:14px;font-weight:normal;color:#000;letter-spacing:0.584px;font-family:'Liberation Sans';">Seed Newsvine</div>
<div class="t" style="left:72.00px;top:160.00px;font-size:14px;font-weight:normal;color:#000;letter-spacing:0.880px;font-family:'Liberation Sans';">Recently Bookmarked</div>
<div class="t" style="left:271.50px;top:160.00px;font-size:14px;font-weight:normal;color:#000;letter-spacing:0.738px;font-family:'Liberation Sans';">LinuxCon: The New…</div>
<div class="t" style="left:454.60px;top:160.00px;font-size:14px;font-weight:normal;color:#000;letter-spacing:0.283px;font-family:'Liberation Sans';">YouTube - JK Weddi…</div>
<div class="t" style="left:630.00px;top:160.00px;font-size:14px;font-weight:normal;color:#000;letter-spacing:0.645px;font-family:'Liberation Sans';">Lojban : Lojban</div>
<div class="t" style="left:762.20px;top:160.00px;font-size:14px;font-weight:normal;color:#000;letter-spacing:0.635px;font-family:'Liberation Sans';">Newsvine - Get Sma…</div>
<div class="t" style="left:943.50px;top:160.00px;font-size:14px;font-weight:normal;color:#000;letter-spacing:0.631px;font-family:'Liberation Sans';">Human Space Flight…</div>
<div class="t" style="left:1266.00px;top:159.00px;font-size:16px;font-weight:bold;color:#000;letter-spacing:0.000px;font-family:'Liberation Sans';">»</div>
<div class="t" style="left:41.00px;top:189.00px;font-size:14px;font-weight:normal;color:#000;letter-spacing:1.028px;font-family:'Liberation Sans';">Dragon …</div>
<div class="t" style="left:139.00px;top:189.00px;font-size:14px;font-weight:normal;color:#000;letter-spacing:1.024px;font-family:'Liberation Sans';">Pet …</div>
<div class="t" style="left:237.50px;top:189.00px;font-size:14px;font-weight:normal;color:#000;letter-spacing:0.782px;font-family:'Liberation Sans';">Welcom…</div>
<div class="t" style="left:336.00px;top:189.00px;font-size:14px;font-weight:normal;color:#000;letter-spacing:0.750px;font-family:'Liberation Sans';">Screen …</div>
<div class="t" style="left:435.00px;top:189.00px;font-size:14px;font-weight:normal;color:#000;letter-spacing:0.729px;font-family:'Liberation Sans';">ThinkG…</div>
<div class="t" style="left:532.00px;top:189.00px;font-size:14px;font-weight:normal;color:#000;letter-spacing:1.272px;font-family:'Liberation Sans';">Newegg…</div>
<div class="t" style="left:631.00px;top:189.00px;font-size:14px;font-weight:normal;color:#000;letter-spacing:0.968px;font-family:'Liberation Sans';">Christm…</div>
<div class="t" style="left:727.00px;top:189.00px;font-size:14px;font-weight:normal;color:#000;letter-spacing:0.801px;font-family:'Liberation Sans';">Balloon …</div>
<div class="t" style="left:826.00px;top:189.00px;font-size:14px;font-weight:normal;color:#000;letter-spacing:0.551px;font-family:'Liberation Sans';">Yggdras…</div>
<div class="t" style="left:923.00px;top:189.00px;font-size:14px;font-weight:normal;color:#000;letter-spacing:0.940px;font-family:'Liberation Sans';">Amazon…</div>
<div class="t" style="left:1022.00px;top:189.00px;font-size:14px;font-weight:normal;color:#000;letter-spacing:0.624px;font-family:'Liberation Sans';">ftp:….msg</div>
<div class="t" style="left:1119.00px;top:189.00px;font-size:14px;font-weight:normal;color:#000;letter-spacing:1.234px;font-family:'Liberation Sans';">Debian….</div></div>
<div class="a" style="left:0;top:22px;width:1px;height:977px;background:#fff"></div><div class="a" style="left:0;top:1px;width:1px;height:21px;background:#b4cef2"></div>
<div class="a" style="left:0;top:208px;width:1264px;height:767px;background:#fff;overflow:hidden">
<div class="a" style="left:16px;top:-8px;width:1232px;height:34px;background:#0b198c;"></div>
<div class="a" style="left:17px;top:-8px;width:1230px;height:33px;background:#d1d1e1;"></div>
<div class="a" style="left:18px;top:-8px;width:1001px;height:33px;background:#f5f5ff;"></div>
<div class="a" style="left:1020px;top:-8px;width:227px;height:33px;background:#e1e4f2;"></div>
<svg class="a" style="left:25px;top:-8px" width="13" height="14" viewBox="0 0 13 14"><path d="M1 0 H10 L12 13 H4Z" fill="#6a80d8"/><path d="M8 0 H10 L12 13 H10Z" fill="#4a5ab8"/></svg>

<div class="a" style="left:16px;top:25px;width:1232px;height:24px;background:#0b198c;"></div>
<div class="a" style="left:17px;top:26px;width:1230px;height:22px;background:#d1d1e1;"></div>
<div class="a" style="left:18px;top:27px;width:1228px;height:20px;background:#738fbf;"></div>
<svg class="a" style="left:906px;top:35px" width="10" height="7"><path d="M0.5 0.5H8.5L4.5 5.5Z" fill="#fff"/></svg>
<svg class="a" style="left:1074px;top:35px" width="10" height="7"><path d="M0.5 0.5H8.5L4.5 5.5Z" fill="#fff"/></svg>
<div class="a" style="left:16px;top:67px;width:1232px;height:700px;background:#0b198c;"></div>
<div class="a" style="left:17px;top:68px;width:1230px;height:699px;background:#d1d1e1;"></div>
<div class="a" style="left:18px;top:69px;width:37px;height:21px;background:linear-gradient(#34497b,#4a5f8e 60%,#586b95);"></div>
<div class="a" style="left:56px;top:69px;width:842px;height:21px;background:linear-gradient(#34497b,#4a5f8e 60%,#586b95);"></div>
<div class="a" style="left:899px;top:69px;width:225px;height:21px;background:linear-gradient(#34497b,#4a5f8e 60%,#586b95);"></div>
<div class="a" style="left:1125px;top:69px;width:56px;height:21px;background:linear-gradient(#34497b,#4a5f8e 60%,#586b95);"></div>
<div class="a" style="left:1182px;top:69px;width:64px;height:21px;background:linear-gradient(#34497b,#4a5f8e 60%,#586b95);"></div>
<div class="a" style="left:55px;top:69px;width:1px;height:21px;background:#111;"></div>
<div class="a" style="left:18px;top:91px;width:1228px;height:27px;background:linear-gradient(#4866a4,#5d7bb4 45%,#7b93c0);"></div>
<svg class="a" style="left:1226px;top:95px" width="16" height="16" viewBox="0 0 16 16"><defs><radialGradient id="cg303" cx="0.5" cy="0.3" r="0.7"><stop offset="0" stop-color="#6a88c0"/><stop offset="1" stop-color="#1e3a7a"/></radialGradient></defs><circle cx="7.7" cy="7.6" r="5.6" fill="url(#cg303)" stroke="#e8ecf8" stroke-width="1.5"/><path d="M5 7 L7.7 4.6 L10.4 7 M5 10.2 L7.7 7.8 L10.4 10.2" fill="none" stroke="#fff" stroke-width="1.4"/><rect x="1" y="14" width="13" height="1.2" fill="#3a4a6a"/></svg>
<div class="a" style="left:18px;top:119px;width:38px;height:52px;background:#e1e4f2;"></div>
<div class="a" style="left:56px;top:119px;width:842px;height:52px;background:#f5f5ff;"></div>
<div class="a" style="left:899px;top:119px;width:225px;height:52px;background:#e1e4f2;"></div>
<div class="a" style="left:1125px;top:119px;width:56px;height:52px;background:#f5f5ff;"></div>
<div class="a" style="left:1182px;top:119px;width:64px;height:52px;background:#e1e4f2;"></div>
<svg class="a" style="left:24px;top:131px" width="28" height="28" viewBox="0 0 28 28"><defs><linearGradient id="fi339" x1="0" y1="0" x2="0" y2="1"><stop offset="0" stop-color="#d8d8f0"/><stop offset="1" stop-color="#a8a8d0"/></linearGradient></defs><path d="M1 1 L25 2.5 V25 L1 26Z" fill="url(#fi339)" stroke="#5a82e0" stroke-width="1.6"/><path d="M3 4 H23 V7 H3Z" fill="#e8e8f8" opacity=".6"/><path d="M4 8 L10 20 V25 H4Z" fill="#b8b8d8" opacity=".5"/><path d="M12.5 8 L24 6.5 L25.5 24.5 L13 26Z" fill="#fbfbfb" stroke="#9a9aa0" stroke-width=".6"/><path d="M14.5 11H22M14.5 13H21M14.5 15.5H22M14.5 18H21M14.5 20.5H22" stroke="#b0b0b8" stroke-width=".9"/><path d="M20 9 L25 3 L26 4 L21 10Z" fill="#3a68d8"/></svg>
<svg class="a" style="left:1108px;top:155px" width="12" height="12" viewBox="0 0 12 12"><defs><linearGradient id="lp363" x1="0" y1="0" x2="1" y2="1"><stop offset="0" stop-color="#b8d0f8"/><stop offset="1" stop-color="#3a58c8"/></linearGradient></defs><rect x="0.5" y="0.5" width="11" height="11" fill="url(#lp363)" stroke="#4a60b0" stroke-width=".6"/><path d="M4 2.5 L7.5 6 L4 9.5" fill="none" stroke="#fff" stroke-width="1.8"/></svg>
<div class="a" style="left:18px;top:172px;width:38px;height:55px;background:#e1e4f2;"></div>
<div class="a" style="left:56px;top:172px;width:842px;height:55px;background:#f5f5ff;"></div>
<div class="a" style="left:899px;top:172px;width:225px;height:55px;background:#e1e4f2;"></div>
<div class="a" style="left:1125px;top:172px;width:56px;height:55px;background:#f5f5ff;"></div>
<div class="a" style="left:1182px;top:172px;width:64px;height:55px;background:#e1e4f2;"></div>
<svg class="a" style="left:24px;top:186px" width="28" height="28" viewBox="0 0 28 28"><defs><linearGradient id="fi394" x1="0" y1="0" x2="0" y2="1"><stop offset="0" stop-color="#d8d8f0"/><stop offset="1" stop-color="#a8a8d0"/></linearGradient></defs><path d="M1 1 L25 2.5 V25 L1 26Z" fill="url(#fi394)" stroke="#5a82e0" stroke-width="1.6"/><path d="M3 4 H23 V7 H3Z" fill="#e8e8f8" opacity=".6"/><path d="M4 8 L10 20 V25 H4Z" fill="#b8b8d8" opacity=".5"/><path d="M12.5 8 L24 6.5 L25.5 24.5 L13 26Z" fill="#fbfbfb" stroke="#9a9aa0" stroke-width=".6"/><path d="M14.5 11H22M14.5 13H21M14.5 15.5H22M14.5 18H21M14.5 20.5H22" stroke="#b0b0b8" stroke-width=".9"/><path d="M20 9 L25 3 L26 4 L21 10Z" fill="#3a68d8"/></svg>
<svg class="a" style="left:904px;top:179px" width="15" height="15" viewBox="0 0 15 15"><circle cx="7.5" cy="7.5" r="7" fill="#a890e8" stroke="#6a58b8" stroke-width=".8"/><circle cx="5" cy="6" r="1" fill="#222"/><circle cx="10" cy="6" r="1" fill="#222"/><path d="M4.5 11 Q7.5 8.5 10.5 11" fill="none" stroke="#222" stroke-width="1"/></svg>
<svg class="a" style="left:1108px;top:211px" width="12" height="12" viewBox="0 0 12 12"><defs><linearGradient id="lp419" x1="0" y1="0" x2="1" y2="1"><stop offset="0" stop-color="#b8d0f8"/><stop offset="1" stop-color="#3a58c8"/></linearGradient></defs><rect x="0.5" y="0.5" width="11" height="11" fill="url(#lp419)" stroke="#4a60b0" stroke-width=".6"/><path d="M4 2.5 L7.5 6 L4 9.5" fill="none" stroke="#fff" stroke-width="1.8"/></svg>
<div class="a" style="left:18px;top:228px;width:38px;height:53px;background:#e1e4f2;"></div>
<div class="a" style="left:56px;top:228px;width:842px;height:53px;background:#f5f5ff;"></div>
<div class="a" style="left:899px;top:228px;width:225px;height:53px;background:#e1e4f2;"></div>
<div class="a" style="left:1125px;top:228px;width:56px;height:53px;background:#f5f5ff;"></div>
<div class="a" style="left:1182px;top:228px;width:64px;height:53px;background:#e1e4f2;"></div>
<svg class="a" style="left:24px;top:240px" width="28" height="28" viewBox="0 0 28 28"><defs><linearGradient id="fi448" x1="0" y1="0" x2="0" y2="1"><stop offset="0" stop-color="#d8d8f0"/><stop offset="1" stop-color="#a8a8d0"/></linearGradient></defs><path d="M1 1 L25 2.5 V25 L1 26Z" fill="url(#fi448)" stroke="#5a82e0" stroke-width="1.6"/><path d="M3 4 H23 V7 H3Z" fill="#e8e8f8" opacity=".6"/><path d="M4 8 L10 20 V25 H4Z" fill="#b8b8d8" opacity=".5"/><path d="M12.5 8 L24 6.5 L25.5 24.5 L13 26Z" fill="#fbfbfb" stroke="#9a9aa0" stroke-width=".6"/><path d="M14.5 11H22M14.5 13H21M14.5 15.5H22M14.5 18H21M14.5 20.5H22" stroke="#b0b0b8" stroke-width=".9"/><path d="M20 9 L25 3 L26 4 L21 10Z" fill="#3a68d8"/></svg>
<svg class="a" style="left:1108px;top:264px" width="12" height="12" viewBox="0 0 12 12"><defs><linearGradient id="lp472" x1="0" y1="0" x2="1" y2="1"><stop offset="0" stop-color="#b8d0f8"/><stop offset="1" stop-color="#3a58c8"/></linearGradient></defs><rect x="0.5" y="0.5" width="11" height="11" fill="url(#lp472)" stroke="#4a60b0" stroke-width=".6"/><path d="M4 2.5 L7.5 6 L4 9.5" fill="none" stroke="#fff" stroke-width="1.8"/></svg>
<div class="a" style="left:18px;top:282px;width:38px;height:53px;background:#e1e4f2;"></div>
<div class="a" style="left:56px;top:282px;width:842px;height:53px;background:#f5f5ff;"></div>
<div class="a" style="left:899px;top:282px;width:225px;height:53px;background:#e1e4f2;"></div>
<div class="a" style="left:1125px;top:282px;width:56px;height:53px;background:#f5f5ff;"></div>
<div class="a" style="left:1182px;top:282px;width:64px;height:53px;background:#e1e4f2;"></div>
<svg class="a" style="left:24px;top:294px" width="28" height="28" viewBox="0 0 28 28"><defs><linearGradient id="fi502" x1="0" y1="0" x2="0" y2="1"><stop offset="0" stop-color="#d8d8f0"/><stop offset="1" stop-color="#a8a8d0"/></linearGradient></defs><path d="M1 1 L25 2.5 V25 L1 26Z" fill="url(#fi502)" stroke="#5a82e0" stroke-width="1.6"/><path d="M3 4 H23 V7 H3Z" fill="#e8e8f8" opacity=".6"/><path d="M4 8 L10 20 V25 H4Z" fill="#b8b8d8" opacity=".5"/><path d="M12.5 8 L24 6.5 L25.5 24.5 L13 26Z" fill="#fbfbfb" stroke="#9a9aa0" stroke-width=".6"/><path d="M14.5 11H22M14.5 13H21M14.5 15.5H22M14.5 18H21M14.5 20.5H22" stroke="#b0b0b8" stroke-width=".9"/><path d="M20 9 L25 3 L26 4 L21 10Z" fill="#3a68d8"/></svg>
<svg class="a" style="left:1108px;top:318px" width="12" height="12" viewBox="0 0 12 12"><defs><linearGradient id="lp526" x1="0" y1="0" x2="1" y2="1"><stop offset="0" stop-color="#b8d0f8"/><stop offset="1" stop-color="#3a58c8"/></linearGradient></defs><rect x="0.5" y="0.5" width="11" height="11" fill="url(#lp526)" stroke="#4a60b0" stroke-width=".6"/><path d="M4 2.5 L7.5 6 L4 9.5" fill="none" stroke="#fff" stroke-width="1.8"/></svg>
<div class="a" style="left:18px;top:336px;width:38px;height:53px;background:#e1e4f2;"></div>
<div class="a" style="left:56px;top:336px;width:842px;height:53px;background:#f5f5ff;"></div>
<div class="a" style="left:899px;top:336px;width:225px;height:53px;background:#e1e4f2;"></div>
<div class="a" style="left:1125px;top:336px;width:56px;height:53px;background:#f5f5ff;"></div>
<div class="a" style="left:1182px;top:336px;width:64px;height:53px;background:#e1e4f2;"></div>
<svg class="a" style="left:24px;top:348px" width="28" height="28" viewBox="0 0 28 28"><defs><linearGradient id="fi556" x1="0" y1="0" x2="0" y2="1"><stop offset="0" stop-color="#d8d8f0"/><stop offset="1" stop-color="#a8a8d0"/></linearGradient></defs><path d="M1 1 L25 2.5 V25 L1 26Z" fill="url(#fi556)" stroke="#5a82e0" stroke-width="1.6"/><path d="M3 4 H23 V7 H3Z" fill="#e8e8f8" opacity=".6"/><path d="M4 8 L10 20 V25 H4Z" fill="#b8b8d8" opacity=".5"/><path d="M12.5 8 L24 6.5 L25.5 24.5 L13 26Z" fill="#fbfbfb" stroke="#9a9aa0" stroke-width=".6"/><path d="M14.5 11H22M14.5 13H21M14.5 15.5H22M14.5 18H21M14.5 20.5H22" stroke="#b0b0b8" stroke-width=".9"/><path d="M20 9 L25 3 L26 4 L21 10Z" fill="#3a68d8"/></svg>
<svg class="a" style="left:1108px;top:372px" width="12" height="12" viewBox="0 0 12 12"><defs><linearGradient id="lp580" x1="0" y1="0" x2="1" y2="1"><stop offset="0" stop-color="#b8d0f8"/><stop offset="1" stop-color="#3a58c8"/></linearGradient></defs><rect x="0.5" y="0.5" width="11" height="11" fill="url(#lp580)" stroke="#4a60b0" stroke-width=".6"/><path d="M4 2.5 L7.5 6 L4 9.5" fill="none" stroke="#fff" stroke-width="1.8"/></svg>
<div class="a" style="left:18px;top:389px;width:38px;height:53px;background:#e1e4f2;"></div>
<div class="a" style="left:56px;top:389px;width:842px;height:53px;background:#f5f5ff;"></div>
<div class="a" style="left:899px;top:389px;width:225px;height:53px;background:#e1e4f2;"></div>
<div class="a" style="left:1125px;top:389px;width:56px;height:53px;background:#f5f5ff;"></div>
<div class="a" style="left:1182px;top:389px;width:64px;height:53px;background:#e1e4f2;"></div>
<svg class="a" style="left:24px;top:402px" width="28" height="28" viewBox="0 0 28 28"><defs><linearGradient id="fi610" x1="0" y1="0" x2="0" y2="1"><stop offset="0" stop-color="#d8d8f0"/><stop offset="1" stop-color="#a8a8d0"/></linearGradient></defs><path d="M1 1 L25 2.5 V25 L1 26Z" fill="url(#fi610)" stroke="#5a82e0" stroke-width="1.6"/><path d="M3 4 H23 V7 H3Z" fill="#e8e8f8" opacity=".6"/><path d="M4 8 L10 20 V25 H4Z" fill="#b8b8d8" opacity=".5"/><path d="M12.5 8 L24 6.5 L25.5 24.5 L13 26Z" fill="#fbfbfb" stroke="#9a9aa0" stroke-width=".6"/><path d="M14.5 11H22M14.5 13H21M14.5 15.5H22M14.5 18H21M14.5 20.5H22" stroke="#b0b0b8" stroke-width=".9"/><path d="M20 9 L25 3 L26 4 L21 10Z" fill="#3a68d8"/></svg>
<svg class="a" style="left:1108px;top:426px" width="12" height="12" viewBox="0 0 12 12"><defs><linearGradient id="lp634" x1="0" y1="0" x2="1" y2="1"><stop offset="0" stop-color="#b8d0f8"/><stop offset="1" stop-color="#3a58c8"/></linearGradient></defs><rect x="0.5" y="0.5" width="11" height="11" fill="url(#lp634)" stroke="#4a60b0" stroke-width=".6"/><path d="M4 2.5 L7.5 6 L4 9.5" fill="none" stroke="#fff" stroke-width="1.8"/></svg>
<div class="a" style="left:18px;top:443px;width:38px;height:53px;background:#e1e4f2;"></div>
<div class="a" style="left:56px;top:443px;width:842px;height:53px;background:#f5f5ff;"></div>
<div class="a" style="left:899px;top:443px;width:225px;height:53px;background:#e1e4f2;"></div>
<div class="a" style="left:1125px;top:443px;width:56px;height:53px;background:#f5f5ff;"></div>
<div class="a" style="left:1182px;top:443px;width:64px;height:53px;background:#e1e4f2;"></div>
<svg class="a" style="left:24px;top:456px" width="28" height="28" viewBox="0 0 28 28"><path d="M1 1.5 L25 2.5 V25 L1 26Z" fill="#f0e0a0" stroke="#5a82e0" stroke-width="1.6"/><path d="M2 14 H14 V25 H2Z" fill="#f89a30"/><path d="M3 3 L14 2 L14.5 20 L4 21Z" fill="#fbfbfb" stroke="#9a9aa0" stroke-width=".6"/><path d="M5 6H12M5 8.5H12M5 11H12M5 13.5H11" stroke="#b0b0b8" stroke-width=".9"/><path d="M12.5 7 L24 6 L25.5 24.5 L13 26Z" fill="#fbfbfb" stroke="#9a9aa0" stroke-width=".6"/><path d="M14.5 11H22M14.5 13H21M14.5 15.5H22M14.5 18H21M14.5 20.5H22" stroke="#b0b0b8" stroke-width=".9"/><path d="M20 9 L25 3 L26 4 L21 10Z" fill="#3a68d8"/><path d="M9 2 L11 0 L12 1 L10 4Z" fill="#3a68d8"/></svg>
<svg class="a" style="left:1108px;top:480px" width="12" height="12" viewBox="0 0 12 12"><defs><linearGradient id="lp688" x1="0" y1="0" x2="1" y2="1"><stop offset="0" stop-color="#b8d0f8"/><stop offset="1" stop-color="#3a58c8"/></linearGradient></defs><rect x="0.5" y="0.5" width="11" height="11" fill="url(#lp688)" stroke="#4a60b0" stroke-width=".6"/><path d="M4 2.5 L7.5 6 L4 9.5" fill="none" stroke="#fff" stroke-width="1.8"/></svg>
<div class="a" style="left:18px;top:497px;width:38px;height:53px;background:#e1e4f2;"></div>
<div class="a" style="left:56px;top:497px;width:842px;height:53px;background:#f5f5ff;"></div>
<div class="a" style="left:899px;top:497px;width:225px;height:53px;background:#e1e4f2;"></div>
<div class="a" style="left:1125px;top:497px;width:56px;height:53px;background:#f5f5ff;"></div>
<div class="a" style="left:1182px;top:497px;width:64px;height:53px;background:#e1e4f2;"></div>
<svg class="a" style="left:24px;top:510px" width="28" height="28" viewBox="0 0 28 28"><defs><linearGradient id="fi718" x1="0" y1="0" x2="0" y2="1"><stop offset="0" stop-color="#d8d8f0"/><stop offset="1" stop-color="#a8a8d0"/></linearGradient></defs><path d="M1 1 L25 2.5 V25 L1 26Z" fill="url(#fi718)" stroke="#5a82e0" stroke-width="1.6"/><path d="M3 4 H23 V7 H3Z" fill="#e8e8f8" opacity=".6"/><path d="M4 8 L10 20 V25 H4Z" fill="#b8b8d8" opacity=".5"/><path d="M12.5 8 L24 6.5 L25.5 24.5 L13 26Z" fill="#fbfbfb" stroke="#9a9aa0" stroke-width=".6"/><path d="M14.5 11H22M14.5 13H21M14.5 15.5H22M14.5 18H21M14.5 20.5H22" stroke="#b0b0b8" stroke-width=".9"/><path d="M20 9 L25 3 L26 4 L21 10Z" fill="#3a68d8"/></svg>
<svg class="a" style="left:1108px;top:534px" width="12" height="12" viewBox="0 0 12 12"><defs><linearGradient id="lp742" x1="0" y1="0" x2="1" y2="1"><stop offset="0" stop-color="#b8d0f8"/><stop offset="1" stop-color="#3a58c8"/></linearGradient></defs><rect x="0.5" y="0.5" width="11" height="11" fill="url(#lp742)" stroke="#4a60b0" stroke-width=".6"/><path d="M4 2.5 L7.5 6 L4 9.5" fill="none" stroke="#fff" stroke-width="1.8"/></svg>
<div class="a" style="left:18px;top:551px;width:1228px;height:27px;background:linear-gradient(#4866a4,#5d7bb4 45%,#7b93c0);"></div>
<svg class="a" style="left:1226px;top:555px" width="16" height="16" viewBox="0 0 16 16"><defs><radialGradient id="cg763" cx="0.5" cy="0.3" r="0.7"><stop offset="0" stop-color="#6a88c0"/><stop offset="1" stop-color="#1e3a7a"/></radialGradient></defs><circle cx="7.7" cy="7.6" r="5.6" fill="url(#cg763)" stroke="#e8ecf8" stroke-width="1.5"/><path d="M5 7 L7.7 4.6 L10.4 7 M5 10.2 L7.7 7.8 L10.4 10.2" fill="none" stroke="#fff" stroke-width="1.4"/><rect x="1" y="14" width="13" height="1.2" fill="#3a4a6a"/></svg>
<div class="a" style="left:18px;top:579px;width:38px;height:53px;background:#e1e4f2;"></div>
<div class="a" style="left:56px;top:579px;width:842px;height:53px;background:#f5f5ff;"></div>
<div class="a" style="left:899px;top:579px;width:225px;height:53px;background:#e1e4f2;"></div>
<div class="a" style="left:1125px;top:579px;width:56px;height:53px;background:#f5f5ff;"></div>
<div class="a" style="left:1182px;top:579px;width:64px;height:53px;background:#e1e4f2;"></div>
<svg class="a" style="left:24px;top:592px" width="28" height="28" viewBox="0 0 28 28"><defs><linearGradient id="fi800" x1="0" y1="0" x2="0" y2="1"><stop offset="0" stop-color="#d8d8f0"/><stop offset="1" stop-color="#a8a8d0"/></linearGradient></defs><path d="M1 1 L25 2.5 V25 L1 26Z" fill="url(#fi800)" stroke="#5a82e0" stroke-width="1.6"/><path d="M3 4 H23 V7 H3Z" fill="#e8e8f8" opacity=".6"/><path d="M4 8 L10 20 V25 H4Z" fill="#b8b8d8" opacity=".5"/><path d="M12.5 8 L24 6.5 L25.5 24.5 L13 26Z" fill="#fbfbfb" stroke="#9a9aa0" stroke-width=".6"/><path d="M14.5 11H22M14.5 13H21M14.5 15.5H22M14.5 18H21M14.5 20.5H22" stroke="#b0b0b8" stroke-width=".9"/><path d="M20 9 L25 3 L26 4 L21 10Z" fill="#3a68d8"/></svg>
<svg class="a" style="left:1108px;top:615px" width="12" height="12" viewBox="0 0 12 12"><defs><linearGradient id="lp823" x1="0" y1="0" x2="1" y2="1"><stop offset="0" stop-color="#b8d0f8"/><stop offset="1" stop-color="#3a58c8"/></linearGradient></defs><rect x="0.5" y="0.5" width="11" height="11" fill="url(#lp823)" stroke="#4a60b0" stroke-width=".6"/><path d="M4 2.5 L7.5 6 L4 9.5" fill="none" stroke="#fff" stroke-width="1.8"/></svg>
<div class="a" style="left:18px;top:633px;width:38px;height:52px;background:#e1e4f2;"></div>
<div class="a" style="left:56px;top:633px;width:842px;height:52px;background:#f5f5ff;"></div>
<div class="a" style="left:899px;top:633px;width:225px;height:52px;background:#e1e4f2;"></div>
<div class="a" style="left:1125px;top:633px;width:56px;height:52px;background:#f5f5ff;"></div>
<div class="a" style="left:1182px;top:633px;width:64px;height:52px;background:#e1e4f2;"></div>
<svg class="a" style="left:24px;top:645px" width="28" height="28" viewBox="0 0 28 28"><path d="M1 1.5 L25 2.5 V25 L1 26Z" fill="#f0e0a0" stroke="#5a82e0" stroke-width="1.6"/><path d="M2 14 H14 V25 H2Z" fill="#f89a30"/><path d="M3 3 L14 2 L14.5 20 L4 21Z" fill="#fbfbfb" stroke="#9a9aa0" stroke-width=".6"/><path d="M5 6H12M5 8.5H12M5 11H12M5 13.5H11" stroke="#b0b0b8" stroke-width=".9"/><path d="M12.5 7 L24 6 L25.5 24.5 L13 26Z" fill="#fbfbfb" stroke="#9a9aa0" stroke-width=".6"/><path d="M14.5 11H22M14.5 13H21M14.5 15.5H22M14.5 18H21M14.5 20.5H22" stroke="#b0b0b8" stroke-width=".9"/><path d="M20 9 L25 3 L26 4 L21 10Z" fill="#3a68d8"/><path d="M9 2 L11 0 L12 1 L10 4Z" fill="#3a68d8"/></svg>
<svg class="a" style="left:1108px;top:669px" width="12" height="12" viewBox="0 0 12 12"><defs><linearGradient id="lp877" x1="0" y1="0" x2="1" y2="1"><stop offset="0" stop-color="#b8d0f8"/><stop offset="1" stop-color="#3a58c8"/></linearGradient></defs><rect x="0.5" y="0.5" width="11" height="11" fill="url(#lp877)" stroke="#4a60b0" stroke-width=".6"/><path d="M4 2.5 L7.5 6 L4 9.5" fill="none" stroke="#fff" stroke-width="1.8"/></svg>
<div class="a" style="left:18px;top:686px;width:38px;height:53px;background:#e1e4f2;"></div>
<div class="a" style="left:56px;top:686px;width:842px;height:53px;background:#f5f5ff;"></div>
<div class="a" style="left:899px;top:686px;width:225px;height:53px;background:#e1e4f2;"></div>
<div class="a" style="left:1125px;top:686px;width:56px;height:53px;background:#f5f5ff;"></div>
<div class="a" style="left:1182px;top:686px;width:64px;height:53px;background:#e1e4f2;"></div>
<svg class="a" style="left:24px;top:698px" width="28" height="28" viewBox="0 0 28 28"><defs><linearGradient id="fi906" x1="0" y1="0" x2="0" y2="1"><stop offset="0" stop-color="#d8d8f0"/><stop offset="1" stop-color="#a8a8d0"/></linearGradient></defs><path d="M1 1 L25 2.5 V25 L1 26Z" fill="url(#fi906)" stroke="#5a82e0" stroke-width="1.6"/><path d="M3 4 H23 V7 H3Z" fill="#e8e8f8" opacity=".6"/><path d="M4 8 L10 20 V25 H4Z" fill="#b8b8d8" opacity=".5"/><path d="M12.5 8 L24 6.5 L25.5 24.5 L13 26Z" fill="#fbfbfb" stroke="#9a9aa0" stroke-width=".6"/><path d="M14.5 11H22M14.5 13H21M14.5 15.5H22M14.5 18H21M14.5 20.5H22" stroke="#b0b0b8" stroke-width=".9"/><path d="M20 9 L25 3 L26 4 L21 10Z" fill="#3a68d8"/></svg>
<svg class="a" style="left:1108px;top:723px" width="12" height="12" viewBox="0 0 12 12"><defs><linearGradient id="lp931" x1="0" y1="0" x2="1" y2="1"><stop offset="0" stop-color="#b8d0f8"/><stop offset="1" stop-color="#3a58c8"/></linearGradient></defs><rect x="0.5" y="0.5" width="11" height="11" fill="url(#lp931)" stroke="#4a60b0" stroke-width=".6"/><path d="M4 2.5 L7.5 6 L4 9.5" fill="none" stroke="#fff" stroke-width="1.8"/></svg>
<div class="a" style="left:18px;top:740px;width:38px;height:60px;background:#e1e4f2;"></div>
<div class="a" style="left:56px;top:740px;width:842px;height:60px;background:#f5f5ff;"></div>
<div class="a" style="left:899px;top:740px;width:225px;height:60px;background:#e1e4f2;"></div>
<div class="a" style="left:1125px;top:740px;width:56px;height:60px;background:#f5f5ff;"></div>
<div class="a" style="left:1182px;top:740px;width:64px;height:60px;background:#e1e4f2;"></div>
<svg class="a" style="left:24px;top:756px" width="28" height="28" viewBox="0 0 28 28"><defs><linearGradient id="fi964" x1="0" y1="0" x2="0" y2="1"><stop offset="0" stop-color="#d8d8f0"/><stop offset="1" stop-color="#a8a8d0"/></linearGradient></defs><path d="M1 1 L25 2.5 V25 L1 26Z" fill="url(#fi964)" stroke="#5a82e0" stroke-width="1.6"/><path d="M3 4 H23 V7 H3Z" fill="#e8e8f8" opacity=".6"/><path d="M4 8 L10 20 V25 H4Z" fill="#b8b8d8" opacity=".5"/><path d="M12.5 8 L24 6.5 L25.5 24.5 L13 26Z" fill="#fbfbfb" stroke="#9a9aa0" stroke-width=".6"/><path d="M14.5 11H22M14.5 13H21M14.5 15.5H22M14.5 18H21M14.5 20.5H22" stroke="#b0b0b8" stroke-width=".9"/><path d="M20 9 L25 3 L26 4 L21 10Z" fill="#3a68d8"/></svg>
<svg class="a" style="left:1108px;top:777px" width="12" height="12" viewBox="0 0 12 12"><defs><linearGradient id="lp985" x1="0" y1="0" x2="1" y2="1"><stop offset="0" stop-color="#b8d0f8"/><stop offset="1" stop-color="#3a58c8"/></linearGradient></defs><rect x="0.5" y="0.5" width="11" height="11" fill="url(#lp985)" stroke="#4a60b0" stroke-width=".6"/><path d="M4 2.5 L7.5 6 L4 9.5" fill="none" stroke="#fff" stroke-width="1.8"/></svg>
<div class="a" style="left:0;top:0;width:1264px;height:767px;will-change:transform"><div class="t" style="left:42.20px;top:-8.00px;font-size:13.8px;font-weight:bold;color:#000;letter-spacing:0.655px;font-family:'Liberation Sans';">Pet Talk</div>
<div class="t" style="left:1026.00px;top:-9.00px;font-size:11.6px;font-weight:normal;color:#000;letter-spacing:0.562px;font-family:'Liberation Sans';">You last visited: Today at</div>
<div class="t" style="left:1172.00px;top:-9.00px;font-size:11.6px;font-weight:normal;color:#666686;letter-spacing:0.533px;font-family:'Liberation Sans';">04:06 PM</div>
<div class="t" style="left:1025.00px;top:6.00px;font-size:11.6px;font-weight:normal;color:#0000ee;letter-spacing:0.310px;font-family:'Liberation Sans';text-decoration:underline;">Private Messages</div>
<div class="t" style="left:1123.00px;top:6.00px;font-size:11.6px;font-weight:normal;color:#000;letter-spacing:0.581px;font-family:'Liberation Sans';">: Unread 0, Total 95.</div>
<div class="t" style="left:52.50px;top:31.00px;font-size:11.6px;font-weight:bold;color:#fff;letter-spacing:-0.396px;font-family:'Liberation Sans';">User CP</div>
<div class="t" style="left:154.75px;top:31.00px;font-size:11.6px;font-weight:bold;color:#fff;letter-spacing:-0.032px;font-family:'Liberation Sans';">FAQ</div>
<div class="t" style="left:253.00px;top:31.00px;font-size:11.6px;font-weight:bold;color:#fff;letter-spacing:0.011px;font-family:'Liberation Sans';">Members List</div>
<div class="t" style="left:417.00px;top:31.00px;font-size:11.6px;font-weight:bold;color:#fff;letter-spacing:-0.186px;font-family:'Liberation Sans';">Calendar</div>
<div class="t" style="left:544.30px;top:31.00px;font-size:11.6px;font-weight:bold;color:#fff;letter-spacing:-0.060px;font-family:'Liberation Sans';">New Posts</div>
<div class="t" style="left:696.70px;top:31.00px;font-size:11.6px;font-weight:bold;color:#fff;letter-spacing:0.039px;font-family:'Liberation Sans';">Today's Posts</div>
<div class="t" style="left:864.60px;top:31.00px;font-size:11.6px;font-weight:bold;color:#fff;letter-spacing:-0.238px;font-family:'Liberation Sans';">Search</div>
<div class="t" style="left:1006.70px;top:31.00px;font-size:11.6px;font-weight:bold;color:#fff;letter-spacing:-0.327px;font-family:'Liberation Sans';">Quick Links</div>
<div class="t" style="left:1168.70px;top:31.00px;font-size:11.6px;font-weight:bold;color:#fff;letter-spacing:-0.211px;font-family:'Liberation Sans';">Log Out</div>
<div class="t" style="left:60.70px;top:73.00px;font-size:11.6px;font-weight:bold;color:#fff;letter-spacing:-0.089px;font-family:'Liberation Sans';">Forum</div>
<div class="t" style="left:985.00px;top:73.00px;font-size:11.6px;font-weight:bold;color:#fff;letter-spacing:0.022px;font-family:'Liberation Sans';">Last Post</div>
<div class="t" style="left:1130.00px;top:73.00px;font-size:11.6px;font-weight:bold;color:#fff;letter-spacing:-0.109px;font-family:'Liberation Sans';">Threads</div>
<div class="t" style="left:1198.50px;top:73.00px;font-size:11.6px;font-weight:bold;color:#fff;letter-spacing:-0.156px;font-family:'Liberation Sans';">Posts</div>
<div class="t" style="left:25.00px;top:98.00px;font-size:13.8px;font-weight:bold;color:#fff;letter-spacing:-0.196px;font-family:'Liberation Sans';">Dog</div>
<div class="t" style="left:62.00px;top:132.00px;font-size:13.8px;font-weight:bold;color:#0000ee;letter-spacing:0.697px;font-family:'Liberation Sans';text-decoration:underline;">Today's Dog</div>
<div class="t" style="left:155.20px;top:133.00px;font-size:11.6px;font-weight:normal;color:#000;letter-spacing:0.348px;font-family:'Liberation Sans';">(1 Viewing)</div>
<div class="t" style="left:62.00px;top:147.00px;font-size:11.6px;font-weight:normal;color:#000;letter-spacing:0.402px;font-family:'Liberation Sans';">Discuss today's Dog of the Day</div>
<div class="t" style="left:904.30px;top:125.00px;font-size:11.6px;font-weight:bold;color:#0000ee;letter-spacing:0.173px;font-family:'Liberation Sans';text-decoration:underline;">Beautiful Foxey</div>
<div class="t" style="left:904.50px;top:139.00px;font-size:11.6px;font-weight:normal;color:#000;letter-spacing:0.052px;font-family:'Liberation Sans';">by</div>
<div class="t" style="left:921.40px;top:139.00px;font-size:11.6px;font-weight:normal;color:#0000ee;letter-spacing:0.396px;font-family:'Liberation Sans';text-decoration:underline;">Daisy and Delilah</div>
<div class="t" style="left:1013.40px;top:153.00px;font-size:11.6px;font-weight:normal;color:#000;letter-spacing:0.515px;font-family:'Liberation Sans';">Today</div>
<div class="t" style="left:1051.60px;top:153.00px;font-size:11.6px;font-weight:normal;color:#666686;letter-spacing:0.405px;font-family:'Liberation Sans';">12:50 PM</div>
<div class="t" style="left:1134.49px;top:139.00px;font-size:13px;font-weight:normal;color:#000;letter-spacing:0.977px;font-family:'Liberation Sans';">4,081</div>
<div class="t" style="left:1191.26px;top:139.00px;font-size:13px;font-weight:normal;color:#000;letter-spacing:0.990px;font-family:'Liberation Sans';">37,240</div>
<div class="t" style="left:62.00px;top:194.00px;font-size:13.8px;font-weight:bold;color:#0000ee;letter-spacing:0.580px;font-family:'Liberation Sans';text-decoration:underline;">Dog Behavior</div>
<div class="t" style="left:164.60px;top:195.00px;font-size:11.6px;font-weight:normal;color:#000;letter-spacing:0.298px;font-family:'Liberation Sans';">(4 Viewing)</div>
<div class="t" style="left:923.20px;top:179.00px;font-size:11.6px;font-weight:bold;color:#0000ee;letter-spacing:-0.124px;font-family:'Liberation Sans';text-decoration:underline;">English Bulldog Aggresive</div>
<div class="t" style="left:904.50px;top:195.00px;font-size:11.6px;font-weight:normal;color:#000;letter-spacing:0.052px;font-family:'Liberation Sans';">by</div>
<div class="t" style="left:921.40px;top:195.00px;font-size:11.6px;font-weight:normal;color:#0000ee;letter-spacing:0.112px;font-family:'Liberation Sans';text-decoration:underline;">carrie</div>
<div class="t" style="left:981.50px;top:209.00px;font-size:11.6px;font-weight:normal;color:#000;letter-spacing:0.694px;font-family:'Liberation Sans';">08-12-2009</div>
<div class="t" style="left:1051.60px;top:209.00px;font-size:11.6px;font-weight:normal;color:#666686;letter-spacing:0.405px;font-family:'Liberation Sans';">04:08 PM</div>
<div class="t" style="left:1134.49px;top:195.00px;font-size:13px;font-weight:normal;color:#000;letter-spacing:0.977px;font-family:'Liberation Sans';">2,428</div>
<div class="t" style="left:1191.26px;top:195.00px;font-size:13px;font-weight:normal;color:#000;letter-spacing:0.990px;font-family:'Liberation Sans';">22,901</div>
<div class="t" style="left:62.00px;top:248.00px;font-size:13.8px;font-weight:bold;color:#0000ee;letter-spacing:0.516px;font-family:'Liberation Sans';text-decoration:underline;">Dog Breeds</div>
<div class="t" style="left:150.50px;top:249.00px;font-size:11.6px;font-weight:normal;color:#000;letter-spacing:0.294px;font-family:'Liberation Sans';">(17 Viewing)</div>
<div class="t" style="left:904.30px;top:234.00px;font-size:11.6px;font-weight:bold;color:#0000ee;letter-spacing:0.308px;font-family:'Liberation Sans';text-decoration:underline;">Wanted- Info On a Mix Breed</div>
<div class="t" style="left:904.50px;top:248.00px;font-size:11.6px;font-weight:normal;color:#000;letter-spacing:0.052px;font-family:'Liberation Sans';">by</div>
<div class="t" style="left:921.40px;top:248.00px;font-size:11.6px;font-weight:normal;color:#0000ee;letter-spacing:0.609px;font-family:'Liberation Sans';text-decoration:underline;">blue</div>
<div class="t" style="left:981.50px;top:262.00px;font-size:11.6px;font-weight:normal;color:#000;letter-spacing:0.694px;font-family:'Liberation Sans';">08-09-2009</div>
<div class="t" style="left:1051.60px;top:262.00px;font-size:11.6px;font-weight:normal;color:#666686;letter-spacing:0.405px;font-family:'Liberation Sans';">09:31 PM</div>
<div class="t" style="left:1134.49px;top:248.00px;font-size:13px;font-weight:normal;color:#000;letter-spacing:0.977px;font-family:'Liberation Sans';">1,978</div>
<div class="t" style="left:1191.26px;top:248.00px;font-size:13px;font-weight:normal;color:#000;letter-spacing:0.990px;font-family:'Liberation Sans';">44,856</div>
<div class="t" style="left:62.00px;top:295.00px;font-size:13.8px;font-weight:bold;color:#0000ee;letter-spacing:0.563px;font-family:'Liberation Sans';text-decoration:underline;">Dog Games</div>
<div class="t" style="left:62.00px;top:310.00px;font-size:11.6px;font-weight:normal;color:#000;letter-spacing:0.541px;font-family:'Liberation Sans';">What games does your dog like to play?</div>
<div class="t" style="left:904.30px;top:288.00px;font-size:11.6px;font-weight:bold;color:#0000ee;letter-spacing:0.223px;font-family:'Liberation Sans';text-decoration:underline;">Playing with treats</div>
<div class="t" style="left:904.50px;top:302.00px;font-size:11.6px;font-weight:normal;color:#000;letter-spacing:0.052px;font-family:'Liberation Sans';">by</div>
<div class="t" style="left:921.40px;top:302.00px;font-size:11.6px;font-weight:normal;color:#0000ee;letter-spacing:0.368px;font-family:'Liberation Sans';text-decoration:underline;">happylabs</div>
<div class="t" style="left:981.50px;top:316.00px;font-size:11.6px;font-weight:normal;color:#000;letter-spacing:0.694px;font-family:'Liberation Sans';">06-12-2009</div>
<div class="t" style="left:1051.60px;top:316.00px;font-size:11.6px;font-weight:normal;color:#666686;letter-spacing:0.405px;font-family:'Liberation Sans';">05:21 PM</div>
<div class="t" style="left:1140.69px;top:303.00px;font-size:13px;font-weight:normal;color:#000;letter-spacing:1.175px;font-family:'Liberation Sans';">310</div>
<div class="t" style="left:1195.39px;top:303.00px;font-size:13px;font-weight:normal;color:#000;letter-spacing:0.977px;font-family:'Liberation Sans';">3,434</div>
<div class="t" style="left:62.00px;top:349.00px;font-size:13.8px;font-weight:bold;color:#551a8b;letter-spacing:0.655px;font-family:'Liberation Sans';text-decoration:underline;">Dog General</div>
<div class="t" style="left:155.40px;top:350.00px;font-size:11.6px;font-weight:normal;color:#000;letter-spacing:0.298px;font-family:'Liberation Sans';">(5 Viewing)</div>
<div class="t" style="left:62.00px;top:364.00px;font-size:11.6px;font-weight:normal;color:#000;letter-spacing:0.541px;font-family:'Liberation Sans';">For topics about your dog that do not fit into any other forum.</div>
<div class="t" style="left:904.30px;top:342.00px;font-size:11.6px;font-weight:bold;color:#0000ee;letter-spacing:0.103px;font-family:'Liberation Sans';text-decoration:underline;">Canine Genetic Diseases -...</div>
<div class="t" style="left:904.50px;top:356.00px;font-size:11.6px;font-weight:normal;color:#000;letter-spacing:0.052px;font-family:'Liberation Sans';">by</div>
<div class="t" style="left:921.40px;top:356.00px;font-size:11.6px;font-weight:normal;color:#0000ee;letter-spacing:0.090px;font-family:'Liberation Sans';text-decoration:underline;">Miss Z</div>
<div class="t" style="left:1013.40px;top:370.00px;font-size:11.6px;font-weight:normal;color:#000;letter-spacing:0.515px;font-family:'Liberation Sans';">Today</div>
<div class="t" style="left:1051.60px;top:370.00px;font-size:11.6px;font-weight:normal;color:#666686;letter-spacing:0.405px;font-family:'Liberation Sans';">04:05 PM</div>
<div class="t" style="left:1130.36px;top:356.00px;font-size:13px;font-weight:normal;color:#000;letter-spacing:0.990px;font-family:'Liberation Sans';">32,774</div>
<div class="t" style="left:1187.12px;top:356.00px;font-size:13px;font-weight:normal;color:#000;letter-spacing:0.998px;font-family:'Liberation Sans';">474,803</div>
<div class="t" style="left:62.00px;top:410.00px;font-size:13.8px;font-weight:bold;color:#0000ee;letter-spacing:0.768px;font-family:'Liberation Sans';text-decoration:underline;">Dog Health</div>
<div class="t" style="left:904.30px;top:395.00px;font-size:11.6px;font-weight:bold;color:#0000ee;letter-spacing:0.141px;font-family:'Liberation Sans';text-decoration:underline;">Casey - Aging - Need Support...</div>
<div class="t" style="left:904.50px;top:410.00px;font-size:11.6px;font-weight:normal;color:#000;letter-spacing:0.052px;font-family:'Liberation Sans';">by</div>
<div class="t" style="left:921.40px;top:410.00px;font-size:11.6px;font-weight:normal;color:#0000ee;letter-spacing:0.368px;font-family:'Liberation Sans';text-decoration:underline;">happylabs</div>
<div class="t" style="left:1013.40px;top:424.00px;font-size:11.6px;font-weight:normal;color:#000;letter-spacing:0.515px;font-family:'Liberation Sans';">Today</div>
<div class="t" style="left:1051.60px;top:424.00px;font-size:11.6px;font-weight:normal;color:#666686;letter-spacing:0.405px;font-family:'Liberation Sans';">01:33 PM</div>
<div class="t" style="left:1134.49px;top:410.00px;font-size:13px;font-weight:normal;color:#000;letter-spacing:0.977px;font-family:'Liberation Sans';">2,594</div>
<div class="t" style="left:1191.26px;top:410.00px;font-size:13px;font-weight:normal;color:#000;letter-spacing:0.990px;font-family:'Liberation Sans';">36,571</div>
<div class="t" style="left:62.00px;top:464.00px;font-size:13.8px;font-weight:bold;color:#0000ee;letter-spacing:0.404px;font-family:'Liberation Sans';text-decoration:underline;">Dog Rescue</div>
<div class="t" style="left:151.30px;top:465.00px;font-size:11.6px;font-weight:normal;color:#000;letter-spacing:0.303px;font-family:'Liberation Sans';">(2 Viewing)</div>
<div class="t" style="left:904.30px;top:450.00px;font-size:11.6px;font-weight:bold;color:#551a8b;letter-spacing:0.155px;font-family:'Liberation Sans';text-decoration:underline;">Wellsville OH - Dog Needs a...</div>
<div class="t" style="left:904.50px;top:464.00px;font-size:11.6px;font-weight:normal;color:#000;letter-spacing:0.052px;font-family:'Liberation Sans';">by</div>
<div class="t" style="left:921.40px;top:464.00px;font-size:11.6px;font-weight:normal;color:#0000ee;letter-spacing:0.313px;font-family:'Liberation Sans';text-decoration:underline;">Anikaca77</div>
<div class="t" style="left:1013.40px;top:478.00px;font-size:11.6px;font-weight:normal;color:#000;letter-spacing:0.515px;font-family:'Liberation Sans';">Today</div>
<div class="t" style="left:1051.60px;top:478.00px;font-size:11.6px;font-weight:normal;color:#666686;letter-spacing:0.405px;font-family:'Liberation Sans';">04:23 PM</div>
<div class="t" style="left:1134.49px;top:464.00px;font-size:13px;font-weight:normal;color:#000;letter-spacing:0.977px;font-family:'Liberation Sans';">1,849</div>
<div class="t" style="left:1191.26px;top:464.00px;font-size:13px;font-weight:normal;color:#000;letter-spacing:0.990px;font-family:'Liberation Sans';">18,062</div>
<div class="t" style="left:62.00px;top:511.00px;font-size:13.8px;font-weight:bold;color:#0000ee;letter-spacing:0.756px;font-family:'Liberation Sans';text-decoration:underline;">Dog Memorial</div>
<div class="t" style="left:166.30px;top:512.00px;font-size:11.6px;font-weight:normal;color:#000;letter-spacing:0.303px;font-family:'Liberation Sans';">(1 Viewing)</div>
<div class="t" style="left:62.00px;top:526.00px;font-size:11.6px;font-weight:normal;color:#000;letter-spacing:0.451px;font-family:'Liberation Sans';">For announcements and remembrance of dogs who have passed away.</div>
<div class="t" style="left:904.30px;top:504.00px;font-size:11.6px;font-weight:bold;color:#0000ee;letter-spacing:0.123px;font-family:'Liberation Sans';text-decoration:underline;">Bone cancer ends life of dog...</div>
<div class="t" style="left:904.50px;top:518.00px;font-size:11.6px;font-weight:normal;color:#000;letter-spacing:0.052px;font-family:'Liberation Sans';">by</div>
<div class="t" style="left:921.40px;top:518.00px;font-size:11.6px;font-weight:normal;color:#0000ee;letter-spacing:0.204px;font-family:'Liberation Sans';text-decoration:underline;">*LabLoverKEB*</div>
<div class="t" style="left:992.30px;top:532.00px;font-size:11.6px;font-weight:normal;color:#000;letter-spacing:0.370px;font-family:'Liberation Sans';">Yesterday</div>
<div class="t" style="left:1051.60px;top:532.00px;font-size:11.6px;font-weight:normal;color:#666686;letter-spacing:0.405px;font-family:'Liberation Sans';">09:54 PM</div>
<div class="t" style="left:1140.69px;top:518.00px;font-size:13px;font-weight:normal;color:#000;letter-spacing:1.175px;font-family:'Liberation Sans';">679</div>
<div class="t" style="left:1191.26px;top:518.00px;font-size:13px;font-weight:normal;color:#000;letter-spacing:0.990px;font-family:'Liberation Sans';">12,753</div>
<div class="t" style="left:25.00px;top:558.00px;font-size:13.8px;font-weight:bold;color:#fff;letter-spacing:0.682px;font-family:'Liberation Sans';">Cat</div>
<div class="t" style="left:62.00px;top:592.00px;font-size:13.8px;font-weight:bold;color:#0000ee;letter-spacing:0.737px;font-family:'Liberation Sans';text-decoration:underline;">Today's Cat</div>
<div class="t" style="left:152.30px;top:593.00px;font-size:11.6px;font-weight:normal;color:#000;letter-spacing:0.338px;font-family:'Liberation Sans';">(1 Viewing)</div>
<div class="t" style="left:62.00px;top:607.00px;font-size:11.6px;font-weight:normal;color:#000;letter-spacing:0.417px;font-family:'Liberation Sans';">Discuss today's Cat of the Day</div>
<div class="t" style="left:904.30px;top:585.00px;font-size:11.6px;font-weight:bold;color:#0000ee;letter-spacing:-0.382px;font-family:'Liberation Sans';text-decoration:underline;">Zoe</div>
<div class="t" style="left:904.50px;top:599.00px;font-size:11.6px;font-weight:normal;color:#000;letter-spacing:0.052px;font-family:'Liberation Sans';">by</div>
<div class="t" style="left:921.40px;top:599.00px;font-size:11.6px;font-weight:normal;color:#0000ee;letter-spacing:0.286px;font-family:'Liberation Sans';text-decoration:underline;">Kirsten</div>
<div class="t" style="left:1013.40px;top:613.00px;font-size:11.6px;font-weight:normal;color:#000;letter-spacing:0.515px;font-family:'Liberation Sans';">Today</div>
<div class="t" style="left:1051.60px;top:613.00px;font-size:11.6px;font-weight:normal;color:#666686;letter-spacing:0.405px;font-family:'Liberation Sans';">02:13 PM</div>
<div class="t" style="left:1134.49px;top:599.00px;font-size:13px;font-weight:normal;color:#000;letter-spacing:0.977px;font-family:'Liberation Sans';">4,195</div>
<div class="t" style="left:1191.26px;top:599.00px;font-size:13px;font-weight:normal;color:#000;letter-spacing:0.990px;font-family:'Liberation Sans';">47,301</div>
<div class="t" style="left:62.00px;top:653.00px;font-size:13.8px;font-weight:bold;color:#0000ee;letter-spacing:0.715px;font-family:'Liberation Sans';text-decoration:underline;">Cat Behavior</div>
<div class="t" style="left:161.50px;top:654.00px;font-size:11.6px;font-weight:normal;color:#000;letter-spacing:0.318px;font-family:'Liberation Sans';">(4 Viewing)</div>
<div class="t" style="left:904.30px;top:639.00px;font-size:11.6px;font-weight:bold;color:#0000ee;letter-spacing:0.060px;font-family:'Liberation Sans';text-decoration:underline;">Toy ideas to use up Lexi's...</div>
<div class="t" style="left:904.50px;top:653.00px;font-size:11.6px;font-weight:normal;color:#000;letter-spacing:0.052px;font-family:'Liberation Sans';">by</div>
<div class="t" style="left:921.40px;top:653.00px;font-size:11.6px;font-weight:normal;color:#0000ee;letter-spacing:0.581px;font-family:'Liberation Sans';text-decoration:underline;">JadeandLexi'skittymom</div>
<div class="t" style="left:1013.40px;top:667.00px;font-size:11.6px;font-weight:normal;color:#000;letter-spacing:0.515px;font-family:'Liberation Sans';">Today</div>
<div class="t" style="left:1051.60px;top:667.00px;font-size:11.6px;font-weight:normal;color:#666686;letter-spacing:0.405px;font-family:'Liberation Sans';">04:42 PM</div>
<div class="t" style="left:1134.49px;top:653.00px;font-size:13px;font-weight:normal;color:#000;letter-spacing:0.977px;font-family:'Liberation Sans';">1,743</div>
<div class="t" style="left:1191.26px;top:653.00px;font-size:13px;font-weight:normal;color:#000;letter-spacing:0.990px;font-family:'Liberation Sans';">17,650</div>
<div class="t" style="left:62.00px;top:707.00px;font-size:13.8px;font-weight:bold;color:#0000ee;letter-spacing:0.703px;font-family:'Liberation Sans';text-decoration:underline;">Cat Breeds</div>
<div class="t" style="left:147.40px;top:708.00px;font-size:11.6px;font-weight:normal;color:#000;letter-spacing:0.298px;font-family:'Liberation Sans';">(1 Viewing)</div>
<div class="t" style="left:904.30px;top:693.00px;font-size:11.6px;font-weight:bold;color:#0000ee;letter-spacing:-0.025px;font-family:'Liberation Sans';text-decoration:underline;">Safari Cats?</div>
<div class="t" style="left:904.50px;top:707.00px;font-size:11.6px;font-weight:normal;color:#000;letter-spacing:0.052px;font-family:'Liberation Sans';">by</div>
<div class="t" style="left:921.40px;top:707.00px;font-size:11.6px;font-weight:normal;color:#0000ee;letter-spacing:0.281px;font-family:'Liberation Sans';text-decoration:underline;">DarntheCat</div>
<div class="t" style="left:1013.40px;top:721.00px;font-size:11.6px;font-weight:normal;color:#000;letter-spacing:0.515px;font-family:'Liberation Sans';">Today</div>
<div class="t" style="left:1051.60px;top:721.00px;font-size:11.6px;font-weight:normal;color:#666686;letter-spacing:0.405px;font-family:'Liberation Sans';">01:20 AM</div>
<div class="t" style="left:1140.69px;top:707.00px;font-size:13px;font-weight:normal;color:#000;letter-spacing:1.175px;font-family:'Liberation Sans';">404</div>
<div class="t" style="left:1195.39px;top:707.00px;font-size:13px;font-weight:normal;color:#000;letter-spacing:0.977px;font-family:'Liberation Sans';">5,802</div>
<div class="t" style="left:62.00px;top:754.00px;font-size:13.8px;font-weight:bold;color:#0000ee;letter-spacing:0.749px;font-family:'Liberation Sans';text-decoration:underline;">Cat Games</div>
<div class="t" style="left:62.00px;top:768.00px;font-size:11.6px;font-weight:normal;color:#000;letter-spacing:1.966px;font-family:'Liberation Sans';">Discuss your games</div>
<div class="t" style="left:904.30px;top:747.00px;font-size:11.6px;font-weight:bold;color:#0000ee;letter-spacing:0.164px;font-family:'Liberation Sans';text-decoration:underline;">The t-shirt game</div>
<div class="t" style="left:904.50px;top:761.00px;font-size:11.6px;font-weight:normal;color:#000;letter-spacing:0.052px;font-family:'Liberation Sans';">by</div>
<div class="t" style="left:921.40px;top:761.00px;font-size:11.6px;font-weight:normal;color:#0000ee;letter-spacing:0.332px;font-family:'Liberation Sans';text-decoration:underline;">catfamily</div>
<div class="t" style="left:1013.40px;top:775.00px;font-size:11.6px;font-weight:normal;color:#000;letter-spacing:0.515px;font-family:'Liberation Sans';">Today</div>
<div class="t" style="left:1051.60px;top:775.00px;font-size:11.6px;font-weight:normal;color:#666686;letter-spacing:0.528px;font-family:'Liberation Sans';">11:02 AM</div>
<div class="t" style="left:1140.69px;top:761.00px;font-size:13px;font-weight:normal;color:#000;letter-spacing:1.657px;font-family:'Liberation Sans';">311</div>
<div class="t" style="left:1195.39px;top:761.00px;font-size:13px;font-weight:normal;color:#000;letter-spacing:0.977px;font-family:'Liberation Sans';">2,078</div></div>
</div>
<div class="a" style="left:1264px;top:207px;width:16px;height:768px;background:#c3c1bc;border-left:1px solid #9a9890;border-top:1px solid #9a9890"></div>
<div class="a" style="left:1279px;top:207px;width:1px;height:768px;background:#e8e7e4"></div>
<div class="a" style="left:1265px;top:209px;width:14px;height:14px;background:#dcdad5;border-top:1px solid #fff;border-left:1px solid #fff;border-right:1px solid #000;border-bottom:1px solid #000"></div>
<svg class="a" style="left:1267px;top:212px" width="10" height="7"><path d="M1 6H9L5 1.5Z" fill="#000"/></svg>
<div class="a" style="left:1265px;top:271px;width:14px;height:225px;background:#dcdad5;border-top:1px solid #fff;border-left:1px solid #fff;border-right:1px solid #000;border-bottom:1px solid #000"></div>
<div class="a" style="left:1265px;top:960px;width:14px;height:14px;background:#dcdad5;border-top:1px solid #fff;border-left:1px solid #fff;border-right:1px solid #000;border-bottom:1px solid #000"></div>
<svg class="a" style="left:1267px;top:964px" width="10" height="7"><path d="M1 1H9L5 5.5Z" fill="#000"/></svg>
<div class="a" style="left:0;top:975px;width:1280px;height:1px;background:#a6a49e"></div>
<div class="a" style="left:0;top:976px;width:1280px;height:23px;background:#dcdad5"></div>
<div class="a" style="left:1px;top:976px;width:659px;height:23px;border-left:1px solid #111;border-top:1px solid #111;border-right:1px solid #fff;border-bottom:1px solid #fff"></div>
<div class="a" style="left:661px;top:976px;width:70px;height:23px;border-left:1px solid #111;border-top:1px solid #111;border-right:1px solid #fff;border-bottom:1px solid #fff"></div>
<div class="a" style="left:732px;top:976px;width:64px;height:23px;border-left:1px solid #111;border-top:1px solid #111;border-right:1px solid #fff;border-bottom:1px solid #fff"></div>
<div class="a" style="left:798px;top:976px;width:482px;height:23px;border-left:1px solid #111;border-top:1px solid #111;border-right:1px solid #fff;border-bottom:1px solid #fff"></div>
<div class="a" style="left:819px;top:978px;width:1px;height:20px;background:#a8a6a0"></div><div class="a" style="left:820px;top:978px;width:1px;height:20px;background:#fff"></div>
<div class="a" style="left:1035px;top:978px;width:1px;height:20px;background:#a8a6a0"></div><div class="a" style="left:1036px;top:978px;width:1px;height:20px;background:#fff"></div>
<div class="a" style="left:1154px;top:978px;width:1px;height:20px;background:#a8a6a0"></div><div class="a" style="left:1155px;top:978px;width:1px;height:20px;background:#fff"></div>
<div class="a" style="left:1275px;top:978px;width:1px;height:20px;background:#a8a6a0"></div><div class="a" style="left:1276px;top:978px;width:1px;height:20px;background:#fff"></div>
<svg class="a" style="left:666px;top:982px" width="12" height="11" viewBox="0 0 12 11"><path d="M0 2 L2 0 H4 L6 2 L8 0 H10 L12 2 V5 L6 11 L0 5Z" fill="#f03a28"/></svg>
<svg class="a" style="left:708px;top:983px" width="7" height="10"><path d="M0 4H6L3 0.5Z M0 5.5H6L3 9Z" fill="#000"/></svg>
<svg class="a" style="left:737px;top:980px" width="15" height="15" viewBox="0 0 16 16"><rect x="0" y="0" width="16" height="16" fill="#555"/><rect x="0.5" y="0.5" width="7.5" height="7.5" fill="#f8f8f8"/><rect x="8" y="0.5" width="7.5" height="7.5" fill="#6a9ae0"/><rect x="0.5" y="8" width="7.5" height="7.5" fill="#222"/><rect x="8" y="8" width="7.5" height="7.5" fill="#c8c8c8"/></svg>
<svg class="a" style="left:756px;top:980px" width="15" height="15" viewBox="0 0 15 15"><rect width="15" height="15" fill="#b8b8b8"/><path d="M7.5 1V14M1.5 4L13.5 11M13.5 4L1.5 11" stroke="#fff" stroke-width="1.4"/></svg>
<svg class="a" style="left:775px;top:981px" width="15" height="13" viewBox="0 0 15 13"><rect x=".5" y=".5" width="14" height="11" fill="#f0eee0" stroke="#b8b6a8"/><path d="M.5 .5L7.5 7L14.5 .5" fill="none" stroke="#b8b6a8"/></svg>
<svg class="a" style="left:801px;top:979px" width="17" height="17" viewBox="0 0 17 17"><circle cx="8.5" cy="8.5" r="7.8" fill="#1a8a1a" stroke="#0a3a0a" stroke-width="1"/><circle cx="7" cy="6" r="3" fill="#4ac04a" opacity=".7"/><path d="M8.5 1.5V8.5" stroke="#0a3a0a" stroke-width="1"/></svg>
<svg class="a" style="left:1001px;top:978px" width="30" height="21" viewBox="0 0 30 21"><polygon points="8.80,0.10 10.04,2.66 12.40,1.06 12.19,3.91 15.04,3.70 13.44,6.06 16.00,7.30 13.44,8.54 15.04,10.90 12.19,10.69 12.40,13.54 10.04,11.94 8.80,14.50 7.56,11.94 5.20,13.54 5.41,10.69 2.56,10.90 4.16,8.54 1.60,7.30 4.16,6.06 2.56,3.70 5.41,3.91 5.20,1.06 7.56,2.66" fill="#f8b428"/><circle cx="8.8" cy="7.3" r="4" fill="#f8d008" stroke="#fff4b0" stroke-width=".7"/><path d="M6 18.5 Q3 18 4 15 Q5 12 9 12.5 Q10.5 8.5 15.5 9 Q19.5 9.5 20.5 12.5 Q24 11.5 26.5 14 Q29 17 26 18.5Z" fill="#f0f0f0" stroke="#8a8a8a" stroke-width=".8"/><path d="M6 18.5 H26 Q27 17 25 16.5 H7Z" fill="#c8c8c8"/></svg>
<svg class="a" style="left:1121px;top:978px" width="30" height="21" viewBox="0 0 30 21"><polygon points="8.80,0.10 10.04,2.66 12.40,1.06 12.19,3.91 15.04,3.70 13.44,6.06 16.00,7.30 13.44,8.54 15.04,10.90 12.19,10.69 12.40,13.54 10.04,11.94 8.80,14.50 7.56,11.94 5.20,13.54 5.41,10.69 2.56,10.90 4.16,8.54 1.60,7.30 4.16,6.06 2.56,3.70 5.41,3.91 5.20,1.06 7.56,2.66" fill="#f8b428"/><circle cx="8.8" cy="7.3" r="4" fill="#f8d008" stroke="#fff4b0" stroke-width=".7"/><path d="M5 15.5 Q4.5 12 8 11 Q9.5 7 13.5 7 Q17 7 18.5 9.5 Q21 9 23 11 Q25.5 12 25.2 14.5 Q25 17 21.5 17 H7 Q5 17 5 15.5Z" fill="#c4c4c4" stroke="#4a4a4a" stroke-width=".9"/><path d="M17 11 Q22 10.5 25 14 Q25 17 21.5 17 H17Z" fill="#8a8a8a"/><path d="M19 12 L21.6 12 L20.2 14.8 L21.8 14.8 L15.5 20.5 L17.6 16.2 L16.2 16.2Z" fill="#f4f000" stroke="#222" stroke-width=".6"/></svg>
<svg class="a" style="left:1243px;top:978px" width="30" height="21" viewBox="0 0 30 21"><polygon points="8.80,0.10 10.04,2.66 12.40,1.06 12.19,3.91 15.04,3.70 13.44,6.06 16.00,7.30 13.44,8.54 15.04,10.90 12.19,10.69 12.40,13.54 10.04,11.94 8.80,14.50 7.56,11.94 5.20,13.54 5.41,10.69 2.56,10.90 4.16,8.54 1.60,7.30 4.16,6.06 2.56,3.70 5.41,3.91 5.20,1.06 7.56,2.66" fill="#f8b428"/><circle cx="8.8" cy="7.3" r="4" fill="#f8d008" stroke="#fff4b0" stroke-width=".7"/><path d="M5 15.5 Q4.5 12 8 11 Q9.5 7 13.5 7 Q17 7 18.5 9.5 Q21 9 23 11 Q25.5 12 25.2 14.5 Q25 17 21.5 17 H7 Q5 17 5 15.5Z" fill="#c4c4c4" stroke="#4a4a4a" stroke-width=".9"/><path d="M17 11 Q22 10.5 25 14 Q25 17 21.5 17 H17Z" fill="#8a8a8a"/><path d="M19 12 L21.6 12 L20.2 14.8 L21.8 14.8 L15.5 20.5 L17.6 16.2 L16.2 16.2Z" fill="#f4f000" stroke="#222" stroke-width=".6"/></svg>
<div class="a" style="left:0;top:1000px;width:1280px;height:24px;background:#4d4d4d"></div>
<svg class="a" style="left:72px;top:1004px" width="16" height="14" viewBox="0 0 16 14"><rect x=".5" y=".5" width="15" height="13" rx="1.5" fill="#bbb" stroke="#777"/><rect x="2" y="2" width="12" height="10" fill="#c01010"/><path d="M3 5H13M3 8H13" stroke="#f06060" stroke-width=".6"/></svg>
<svg class="a" style="left:251px;top:1004px" width="16" height="14" viewBox="0 0 16 14"><rect x=".5" y=".5" width="15" height="13" fill="#f0f0f0" stroke="#888"/><rect x="1" y="1" width="14" height="3" fill="#5a8ad8"/></svg>
<svg class="a" style="left:431px;top:1002px" width="16" height="18" viewBox="0 0 16 18"><path d="M1 7 L8 1 L15 7 V17 H1Z" fill="#e8e0c8" stroke="#777" stroke-width=".8"/><circle cx="11" cy="13" r="4" fill="#2a6ad8"/></svg>
<svg class="a" style="left:611px;top:1004px" width="15" height="15" viewBox="0 0 16 16"><circle cx="8" cy="8" r="7" fill="#0e4a9a"/><circle cx="6" cy="6" r="3" fill="#4aa0e0" opacity=".7"/></svg>
<svg class="a" style="left:790px;top:1004px" width="15" height="15" viewBox="0 0 16 16"><path d="M2 2L14 14M14 2L2 14" stroke="#f08a10" stroke-width="3.2" stroke-linecap="round"/><rect x="2" y="6" width="12" height="4" fill="#222"/><text x="8" y="9.5" font-family="Liberation Sans" font-size="4" font-weight="bold" fill="#fff" text-anchor="middle">chat</text></svg>
<svg class="a" style="left:969px;top:1004px" width="16" height="14" viewBox="0 0 16 14"><rect x=".5" y=".5" width="15" height="13" rx="1.5" fill="#bbb" stroke="#777"/><rect x="2" y="2" width="12" height="10" fill="#c01010"/><path d="M3 5H13M3 8H13" stroke="#f06060" stroke-width=".6"/></svg>
<svg class="a" style="left:1144px;top:1000px" width="24" height="24" viewBox="0 0 16 16"><path d="M2 2L14 14M14 2L2 14" stroke="#f08a10" stroke-width="3.2" stroke-linecap="round"/><rect x="2" y="6" width="12" height="4" fill="#222"/><text x="8" y="9.5" font-family="Liberation Sans" font-size="4" font-weight="bold" fill="#fff" text-anchor="middle">chat</text></svg>
<div class="a" style="left:0;top:0;width:1280px;height:1024px;will-change:transform"><div class="t" style="left:7.00px;top:980.00px;font-size:14px;font-weight:normal;color:#000;letter-spacing:1.439px;font-family:'Liberation Sans';">Done</div>
<div class="t" style="left:683.00px;top:984.00px;font-size:10px;font-weight:normal;color:#000;letter-spacing:-1.001px;font-family:'Liberation Mono';font-weight:600;">Buzz</div>
<div class="t" style="left:828.10px;top:980.00px;font-size:14px;font-weight:normal;color:#000;letter-spacing:0.506px;font-family:'Liberation Sans';">Now: Partly Sunny, 86° F</div>
<div class="t" style="left:1046.60px;top:980.00px;font-size:14px;font-weight:normal;color:#000;letter-spacing:0.572px;font-family:'Liberation Sans';">Sat: 88° F</div>
<div class="t" style="left:1163.40px;top:980.00px;font-size:14px;font-weight:normal;color:#000;letter-spacing:0.706px;font-family:'Liberation Sans';">Sun: 85° F</div>
<div class="t" style="left:6.25px;top:1005.00px;font-size:13px;font-weight:normal;color:#000;letter-spacing:-0.143px;font-family:'Liberation Sans';">desktop 1</div>
<div class="t" style="left:93.50px;top:1005.00px;font-size:13px;font-weight:normal;color:#8c8c8c;letter-spacing:-0.044px;font-family:'Liberation Sans';">None - Terminator</div>
<div class="t" style="left:272.50px;top:1005.00px;font-size:13px;font-weight:normal;color:#8c8c8c;letter-spacing:-0.087px;font-family:'Liberation Sans';">xedit</div>
<div class="t" style="left:452.80px;top:1005.00px;font-size:13px;font-weight:normal;color:#8c8c8c;letter-spacing:-0.065px;font-family:'Liberation Sans';">alt.comp.linux on news.al</div>
<div class="t" style="left:631.50px;top:1005.00px;font-size:13px;font-weight:normal;color:#2a2ae8;letter-spacing:-0.155px;font-family:'Liberation Sans';">Pet Talk - Powered by vB</div>
<div class="t" style="left:811.25px;top:1005.00px;font-size:13px;font-weight:normal;color:#8c8c8c;letter-spacing:-0.332px;font-family:'Liberation Sans';">XChat: Hellow @ Ubuntu</div>
<div class="t" style="left:989.00px;top:1005.00px;font-size:13px;font-weight:normal;color:#000;letter-spacing:-0.026px;font-family:'Liberation Sans';">None - Terminator</div>
<div class="t" style="left:1175.30px;top:1005.00px;font-size:13px;font-weight:normal;color:#000;letter-spacing:-0.247px;font-family:'Liberation Sans';">2009-08-14 16:58</div></div>
</body></html>
